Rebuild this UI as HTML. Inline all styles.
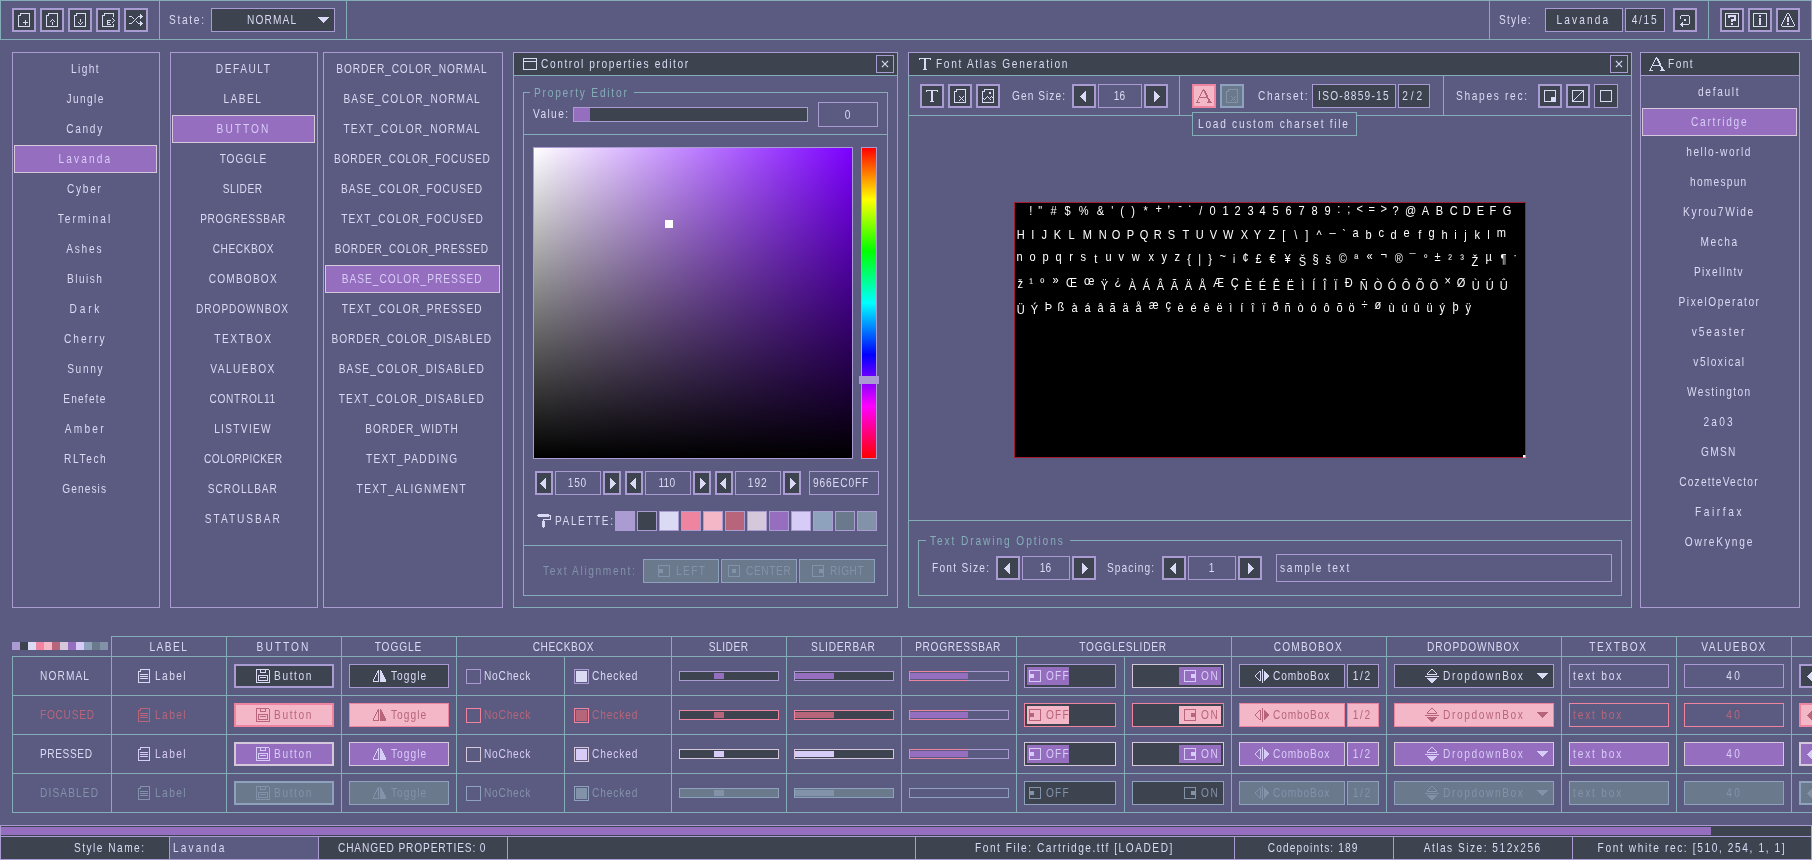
<!DOCTYPE html>
<html><head><meta charset="utf-8"><title>rGuiStyler</title><style>
html,body{margin:0;padding:0}
body{width:1812px;height:860px;background:#5b5b81;position:relative;overflow:hidden;font-family:"Liberation Sans",sans-serif;font-size:13px;line-height:15px}
.r{position:absolute;box-sizing:border-box}
.t{will-change:transform;position:absolute;display:flex;height:15px;white-space:pre;overflow:visible}
.t span{display:inline-block;white-space:pre}
.i{position:absolute;display:block;shape-rendering:crispEdges}
.at{will-change:transform;position:absolute;height:15px;color:#fff;white-space:pre}
.at span{position:absolute;display:block;transform:scaleX(0.85)}
</style></head><body>
<div class="r" style="left:0px;top:0px;width:1812px;height:1px;background:#84adb7;"></div>
<div class="r" style="left:0px;top:39px;width:1812px;height:1px;background:#84adb7;"></div>
<div class="r" style="left:0px;top:0px;width:1px;height:40px;background:#84adb7;"></div>
<div class="r" style="left:159px;top:0px;width:1px;height:40px;background:#84adb7;"></div>
<div class="r" style="left:346px;top:0px;width:1px;height:40px;background:#84adb7;"></div>
<div class="r" style="left:1489px;top:0px;width:1px;height:40px;background:#84adb7;"></div>
<div class="r" style="left:1708px;top:0px;width:1px;height:40px;background:#84adb7;"></div>
<div class="r" style="left:1811px;top:0px;width:1px;height:40px;background:#84adb7;"></div>
<div class="r" style="left:12px;top:8px;width:24px;height:24px;background:#3e4350;border:2px solid #ab9bd3;"></div>
<svg class="i" style="left:16px;top:12px" width="16" height="16" viewBox="0 0 16 16"><path fill="#dadaf4" d="M4 1h10v1h-10zM4 2h1v1h-1zM13 2h1v1h-1zM2 3h3v1h-3zM13 3h1v1h-1zM2 4h1v1h-1zM13 4h1v1h-1zM2 5h1v1h-1zM13 5h1v1h-1zM2 6h1v1h-1zM13 6h1v1h-1zM2 7h1v1h-1zM13 7h1v1h-1zM2 8h1v1h-1zM9 8h1v1h-1zM13 8h1v1h-1zM2 9h1v1h-1zM9 9h1v1h-1zM13 9h1v1h-1zM2 10h1v1h-1zM7 10h5v1h-5zM13 10h1v1h-1zM2 11h1v1h-1zM9 11h1v1h-1zM13 11h1v1h-1zM2 12h1v1h-1zM9 12h1v1h-1zM13 12h1v1h-1zM2 13h1v1h-1zM13 13h1v1h-1zM2 14h12v1h-12z"/></svg>
<div class="r" style="left:40px;top:8px;width:24px;height:24px;background:#3e4350;border:2px solid #ab9bd3;"></div>
<svg class="i" style="left:44px;top:12px" width="16" height="16" viewBox="0 0 16 16"><path fill="#dadaf4" d="M4 1h10v1h-10zM4 2h1v1h-1zM13 2h1v1h-1zM2 3h3v1h-3zM13 3h1v1h-1zM2 4h1v1h-1zM13 4h1v1h-1zM2 5h1v1h-1zM13 5h1v1h-1zM2 6h1v1h-1zM13 6h1v1h-1zM2 7h1v1h-1zM8 7h1v1h-1zM13 7h1v1h-1zM2 8h1v1h-1zM7 8h1v1h-1zM9 8h1v1h-1zM13 8h1v1h-1zM2 9h1v1h-1zM6 9h1v1h-1zM10 9h1v1h-1zM13 9h1v1h-1zM2 10h1v1h-1zM8 10h1v1h-1zM13 10h1v1h-1zM2 11h1v1h-1zM8 11h1v1h-1zM13 11h1v1h-1zM2 12h1v1h-1zM8 12h1v1h-1zM13 12h1v1h-1zM2 13h1v1h-1zM13 13h1v1h-1zM2 14h12v1h-12z"/></svg>
<div class="r" style="left:68px;top:8px;width:24px;height:24px;background:#3e4350;border:2px solid #ab9bd3;"></div>
<svg class="i" style="left:72px;top:12px" width="16" height="16" viewBox="0 0 16 16"><path fill="#dadaf4" d="M4 1h10v1h-10zM4 2h1v1h-1zM13 2h1v1h-1zM2 3h3v1h-3zM13 3h1v1h-1zM2 4h1v1h-1zM13 4h1v1h-1zM2 5h1v1h-1zM13 5h1v1h-1zM2 6h1v1h-1zM13 6h1v1h-1zM2 7h1v1h-1zM8 7h1v1h-1zM13 7h1v1h-1zM2 8h1v1h-1zM8 8h1v1h-1zM13 8h1v1h-1zM2 9h1v1h-1zM8 9h1v1h-1zM13 9h1v1h-1zM2 10h1v1h-1zM6 10h1v1h-1zM10 10h1v1h-1zM13 10h1v1h-1zM2 11h1v1h-1zM7 11h1v1h-1zM9 11h1v1h-1zM13 11h1v1h-1zM2 12h1v1h-1zM8 12h1v1h-1zM13 12h1v1h-1zM2 13h1v1h-1zM13 13h1v1h-1zM2 14h12v1h-12z"/></svg>
<div class="r" style="left:96px;top:8px;width:24px;height:24px;background:#3e4350;border:2px solid #ab9bd3;"></div>
<svg class="i" style="left:100px;top:12px" width="16" height="16" viewBox="0 0 16 16"><path fill="#dadaf4" d="M4 1h10v1h-10zM4 2h1v1h-1zM13 2h1v1h-1zM2 3h3v1h-3zM13 3h1v1h-1zM2 4h1v1h-1zM13 4h1v1h-1zM2 5h1v1h-1zM2 6h1v1h-1zM12 6h1v1h-1zM2 7h1v1h-1zM13 7h1v1h-1zM2 8h1v1h-1zM7 8h4v1h-4zM14 8h1v1h-1zM2 9h1v1h-1zM7 9h1v1h-1zM13 9h1v1h-1zM2 10h1v1h-1zM7 10h3v1h-3zM12 10h1v1h-1zM2 11h1v1h-1zM7 11h1v1h-1zM2 12h1v1h-1zM7 12h4v1h-4zM13 12h1v1h-1zM2 13h1v1h-1zM13 13h1v1h-1zM2 14h12v1h-12z"/></svg>
<div class="r" style="left:124px;top:8px;width:24px;height:24px;background:#3e4350;border:2px solid #ab9bd3;"></div>
<svg class="i" style="left:128px;top:12px" width="16" height="16" viewBox="0 0 16 16"><path fill="#dadaf4" d="M12 2h1v1h-1zM12 3h2v1h-2zM1 4h3v1h-3zM10 4h5v1h-5zM4 5h1v1h-1zM9 5h1v1h-1zM12 5h2v1h-2zM5 6h1v1h-1zM8 6h1v1h-1zM12 6h1v1h-1zM7 7h1v1h-1zM6 8h1v1h-1zM5 9h1v1h-1zM8 9h1v1h-1zM12 9h1v1h-1zM4 10h1v1h-1zM9 10h1v1h-1zM12 10h2v1h-2zM1 11h3v1h-3zM10 11h5v1h-5zM12 12h2v1h-2zM12 13h1v1h-1z"/></svg>
<div class="t" style="left:169px;top:12px;width:40px;justify-content:flex-start;color:#dadaf4;"><span style="letter-spacing:2.181px;transform:scaleX(0.78);transform-origin:left;margin-left:0.00px">State:</span></div>
<div class="r" style="left:211px;top:8px;width:124px;height:24px;background:#3e4350;border:1px solid #ab9bd3;"></div>
<div class="t" style="left:211px;top:12px;width:124px;justify-content:center;color:#dadaf4;"><span style="letter-spacing:1.441px;transform:scaleX(0.78);transform-origin:center;margin-left:-0.84px">NORMAL</span></div>
<svg class="i" style="left:318px;top:17px" width="11" height="6"><path fill="#dadaf4" d="M0 0h11v1h-11zM1 1h9v1h-9zM2 2h7v1h-7zM3 3h5v1h-5zM4 4h3v1h-3zM5 5h1v1h-1z"/></svg>
<div class="t" style="left:1499px;top:12px;width:40px;justify-content:flex-start;color:#dadaf4;"><span style="letter-spacing:1.6px;transform:scaleX(0.78);transform-origin:left;margin-left:0.00px">Style:</span></div>
<div class="r" style="left:1545px;top:8px;width:78px;height:24px;background:#3e4350;border:1px solid #ab9bd3;"></div>
<div class="t" style="left:1545px;top:12px;width:78px;justify-content:center;color:#dadaf4;"><span style="letter-spacing:2.691px;transform:scaleX(0.78);transform-origin:center;margin-left:-0.35px">Lavanda</span></div>
<div class="r" style="left:1625px;top:8px;width:40px;height:24px;background:#3e4350;border:1px solid #ab9bd3;"></div>
<div class="t" style="left:1625px;top:12px;width:40px;justify-content:center;color:#dadaf4;"><span style="letter-spacing:2.164px;transform:scaleX(0.78);transform-origin:center;margin-left:-0.56px">4/15</span></div>
<div class="r" style="left:1673px;top:8px;width:24px;height:24px;background:#3e4350;border:2px solid #ab9bd3;"></div>
<svg class="i" style="left:1677px;top:12px" width="16" height="16" viewBox="0 0 16 16"><path fill="#dadaf4" d="M4 3h8v1h-8zM3 4h1v1h-1zM12 4h1v1h-1zM3 5h1v1h-1zM12 5h1v1h-1zM3 6h1v1h-1zM12 6h1v1h-1zM7 7h2v1h-2zM12 7h1v1h-1zM7 8h2v1h-2zM12 8h1v1h-1zM12 9h1v1h-1zM5 10h1v1h-1zM12 10h1v1h-1zM4 11h2v1h-2zM12 11h1v1h-1zM3 12h9v1h-9zM4 13h2v1h-2zM5 14h1v1h-1z"/></svg>
<div class="r" style="left:1720px;top:8px;width:24px;height:24px;background:#3e4350;border:2px solid #ab9bd3;"></div>
<svg class="i" style="left:1724px;top:12px" width="16" height="16" viewBox="0 0 16 16"><path fill="#dadaf4" d="M1 1h14v1h-14zM1 2h1v1h-1zM14 2h1v1h-1zM1 3h1v1h-1zM4 3h8v1h-8zM14 3h1v1h-1zM1 4h1v1h-1zM4 4h8v1h-8zM14 4h1v1h-1zM1 5h1v1h-1zM4 5h2v1h-2zM10 5h2v1h-2zM14 5h1v1h-1zM1 6h1v1h-1zM10 6h2v1h-2zM14 6h1v1h-1zM1 7h1v1h-1zM7 7h5v1h-5zM14 7h1v1h-1zM1 8h1v1h-1zM7 8h5v1h-5zM14 8h1v1h-1zM1 9h1v1h-1zM7 9h2v1h-2zM14 9h1v1h-1zM1 10h1v1h-1zM14 10h1v1h-1zM1 11h1v1h-1zM7 11h2v1h-2zM14 11h1v1h-1zM1 12h1v1h-1zM7 12h2v1h-2zM14 12h1v1h-1zM1 13h1v1h-1zM14 13h1v1h-1zM1 14h14v1h-14z"/></svg>
<div class="r" style="left:1748px;top:8px;width:24px;height:24px;background:#3e4350;border:2px solid #ab9bd3;"></div>
<svg class="i" style="left:1752px;top:12px" width="16" height="16" viewBox="0 0 16 16"><path fill="#dadaf4" d="M1 1h14v1h-14zM1 2h1v1h-1zM14 2h1v1h-1zM1 3h1v1h-1zM7 3h2v1h-2zM14 3h1v1h-1zM1 4h1v1h-1zM7 4h2v1h-2zM14 4h1v1h-1zM1 5h1v1h-1zM14 5h1v1h-1zM1 6h1v1h-1zM7 6h2v1h-2zM14 6h1v1h-1zM1 7h1v1h-1zM7 7h2v1h-2zM14 7h1v1h-1zM1 8h1v1h-1zM7 8h2v1h-2zM14 8h1v1h-1zM1 9h1v1h-1zM7 9h2v1h-2zM14 9h1v1h-1zM1 10h1v1h-1zM7 10h2v1h-2zM14 10h1v1h-1zM1 11h1v1h-1zM7 11h2v1h-2zM14 11h1v1h-1zM1 12h1v1h-1zM7 12h2v1h-2zM14 12h1v1h-1zM1 13h1v1h-1zM14 13h1v1h-1zM1 14h14v1h-14z"/></svg>
<div class="r" style="left:1776px;top:8px;width:24px;height:24px;background:#3e4350;border:2px solid #ab9bd3;"></div>
<svg class="i" style="left:1780px;top:12px" width="16" height="16" viewBox="0 0 16 16"><path fill="#dadaf4" d="M7 1h2v1h-2zM6 2h1v1h-1zM9 2h1v1h-1zM6 3h1v1h-1zM9 3h1v1h-1zM5 4h1v1h-1zM10 4h1v1h-1zM5 5h1v1h-1zM7 5h2v1h-2zM10 5h1v1h-1zM4 6h1v1h-1zM7 6h2v1h-2zM11 6h1v1h-1zM4 7h1v1h-1zM7 7h2v1h-2zM11 7h1v1h-1zM3 8h1v1h-1zM7 8h2v1h-2zM12 8h1v1h-1zM3 9h1v1h-1zM7 9h2v1h-2zM12 9h1v1h-1zM2 10h1v1h-1zM13 10h1v1h-1zM2 11h1v1h-1zM7 11h2v1h-2zM13 11h1v1h-1zM1 12h1v1h-1zM7 12h2v1h-2zM14 12h1v1h-1zM1 13h1v1h-1zM14 13h1v1h-1zM2 14h12v1h-12z"/></svg>
<div class="r" style="left:12px;top:52px;width:148px;height:556px;border:1px solid #ab9bd3;"></div>
<div class="t" style="left:14px;top:61px;width:143px;justify-content:center;color:#dadaf4;"><span style="letter-spacing:1.767px;transform:scaleX(0.78);transform-origin:center;margin-left:-0.71px">Light</span></div>
<div class="t" style="left:14px;top:91px;width:143px;justify-content:center;color:#dadaf4;"><span style="letter-spacing:1.8px;transform:scaleX(0.78);transform-origin:center;margin-left:-0.70px">Jungle</span></div>
<div class="t" style="left:14px;top:121px;width:143px;justify-content:center;color:#dadaf4;"><span style="letter-spacing:2.112px;transform:scaleX(0.78);transform-origin:center;margin-left:-0.58px">Candy</span></div>
<div class="r" style="left:14px;top:145px;width:143px;height:28px;background:#966ec0;border:1px solid #d5c8db;"></div>
<div class="t" style="left:14px;top:151px;width:143px;justify-content:center;color:#d7ccf7;"><span style="letter-spacing:2.691px;transform:scaleX(0.78);transform-origin:center;margin-left:-0.35px">Lavanda</span></div>
<div class="t" style="left:14px;top:181px;width:143px;justify-content:center;color:#dadaf4;"><span style="letter-spacing:2.196px;transform:scaleX(0.78);transform-origin:center;margin-left:-0.54px">Cyber</span></div>
<div class="t" style="left:14px;top:211px;width:143px;justify-content:center;color:#dadaf4;"><span style="letter-spacing:2.598px;transform:scaleX(0.78);transform-origin:center;margin-left:-0.39px">Terminal</span></div>
<div class="t" style="left:14px;top:241px;width:143px;justify-content:center;color:#dadaf4;"><span style="letter-spacing:2.282px;transform:scaleX(0.78);transform-origin:center;margin-left:-0.51px">Ashes</span></div>
<div class="t" style="left:14px;top:271px;width:143px;justify-content:center;color:#dadaf4;"><span style="letter-spacing:1.842px;transform:scaleX(0.78);transform-origin:center;margin-left:-0.68px">Bluish</span></div>
<div class="t" style="left:14px;top:301px;width:143px;justify-content:center;color:#dadaf4;"><span style="letter-spacing:3.586px;transform:scaleX(0.78);transform-origin:center;margin-left:-0.00px">Dark</span></div>
<div class="t" style="left:14px;top:331px;width:143px;justify-content:center;color:#dadaf4;"><span style="letter-spacing:2.609px;transform:scaleX(0.78);transform-origin:center;margin-left:-0.38px">Cherry</span></div>
<div class="t" style="left:14px;top:361px;width:143px;justify-content:center;color:#dadaf4;"><span style="letter-spacing:2.099px;transform:scaleX(0.78);transform-origin:center;margin-left:-0.58px">Sunny</span></div>
<div class="t" style="left:14px;top:391px;width:143px;justify-content:center;color:#dadaf4;"><span style="letter-spacing:1.569px;transform:scaleX(0.78);transform-origin:center;margin-left:-0.79px">Enefete</span></div>
<div class="t" style="left:14px;top:421px;width:143px;justify-content:center;color:#dadaf4;"><span style="letter-spacing:2.864px;transform:scaleX(0.78);transform-origin:center;margin-left:-0.28px">Amber</span></div>
<div class="t" style="left:14px;top:451px;width:143px;justify-content:center;color:#dadaf4;"><span style="letter-spacing:2.044px;transform:scaleX(0.78);transform-origin:center;margin-left:-0.60px">RLTech</span></div>
<div class="t" style="left:14px;top:481px;width:143px;justify-content:center;color:#dadaf4;"><span style="letter-spacing:1.389px;transform:scaleX(0.78);transform-origin:center;margin-left:-0.86px">Genesis</span></div>
<div class="r" style="left:170px;top:52px;width:148px;height:556px;border:1px solid #ab9bd3;"></div>
<div class="t" style="left:172px;top:61px;width:143px;justify-content:center;color:#dadaf4;"><span style="letter-spacing:1.969px;transform:scaleX(0.78);transform-origin:center;margin-left:-0.63px">DEFAULT</span></div>
<div class="t" style="left:172px;top:91px;width:143px;justify-content:center;color:#dadaf4;"><span style="letter-spacing:1.87px;transform:scaleX(0.78);transform-origin:center;margin-left:-0.67px">LABEL</span></div>
<div class="r" style="left:172px;top:115px;width:143px;height:28px;background:#966ec0;border:1px solid #d5c8db;"></div>
<div class="t" style="left:172px;top:121px;width:143px;justify-content:center;color:#d7ccf7;"><span style="letter-spacing:2.615px;transform:scaleX(0.78);transform-origin:center;margin-left:-0.38px">BUTTON</span></div>
<div class="t" style="left:172px;top:151px;width:143px;justify-content:center;color:#dadaf4;"><span style="letter-spacing:1.16px;transform:scaleX(0.78);transform-origin:center;margin-left:-0.95px">TOGGLE</span></div>
<div class="t" style="left:172px;top:181px;width:143px;justify-content:center;color:#dadaf4;"><span style="letter-spacing:0.711px;transform:scaleX(0.78);transform-origin:center;margin-left:-1.12px">SLIDER</span></div>
<div class="t" style="left:172px;top:211px;width:143px;justify-content:center;color:#dadaf4;"><span style="letter-spacing:0.895px;transform:scaleX(0.78);transform-origin:center;margin-left:-1.05px">PROGRESSBAR</span></div>
<div class="t" style="left:172px;top:241px;width:143px;justify-content:center;color:#dadaf4;"><span style="letter-spacing:0.732px;transform:scaleX(0.78);transform-origin:center;margin-left:-1.11px">CHECKBOX</span></div>
<div class="t" style="left:172px;top:271px;width:143px;justify-content:center;color:#dadaf4;"><span style="letter-spacing:1.498px;transform:scaleX(0.78);transform-origin:center;margin-left:-0.82px">COMBOBOX</span></div>
<div class="t" style="left:172px;top:301px;width:143px;justify-content:center;color:#dadaf4;"><span style="letter-spacing:1.178px;transform:scaleX(0.78);transform-origin:center;margin-left:-0.94px">DROPDOWNBOX</span></div>
<div class="t" style="left:172px;top:331px;width:143px;justify-content:center;color:#dadaf4;"><span style="letter-spacing:2.024px;transform:scaleX(0.78);transform-origin:center;margin-left:-0.61px">TEXTBOX</span></div>
<div class="t" style="left:172px;top:361px;width:143px;justify-content:center;color:#dadaf4;"><span style="letter-spacing:1.848px;transform:scaleX(0.78);transform-origin:center;margin-left:-0.68px">VALUEBOX</span></div>
<div class="t" style="left:172px;top:391px;width:143px;justify-content:center;color:#dadaf4;"><span style="letter-spacing:0.913px;transform:scaleX(0.78);transform-origin:center;margin-left:-1.04px">CONTROL11</span></div>
<div class="t" style="left:172px;top:421px;width:143px;justify-content:center;color:#dadaf4;"><span style="letter-spacing:1.68px;transform:scaleX(0.78);transform-origin:center;margin-left:-0.74px">LISTVIEW</span></div>
<div class="t" style="left:172px;top:451px;width:143px;justify-content:center;color:#dadaf4;"><span style="letter-spacing:0.537px;transform:scaleX(0.78);transform-origin:center;margin-left:-1.19px">COLORPICKER</span></div>
<div class="t" style="left:172px;top:481px;width:143px;justify-content:center;color:#dadaf4;"><span style="letter-spacing:1.215px;transform:scaleX(0.78);transform-origin:center;margin-left:-0.93px">SCROLLBAR</span></div>
<div class="t" style="left:172px;top:511px;width:143px;justify-content:center;color:#dadaf4;"><span style="letter-spacing:2.493px;transform:scaleX(0.78);transform-origin:center;margin-left:-0.43px">STATUSBAR</span></div>
<div class="r" style="left:323px;top:52px;width:180px;height:556px;border:1px solid #ab9bd3;"></div>
<div class="t" style="left:325px;top:61px;width:175px;justify-content:center;color:#dadaf4;"><span style="letter-spacing:1.154px;transform:scaleX(0.78);transform-origin:center;margin-left:-0.95px">BORDER_COLOR_NORMAL</span></div>
<div class="t" style="left:325px;top:91px;width:175px;justify-content:center;color:#dadaf4;"><span style="letter-spacing:1.485px;transform:scaleX(0.78);transform-origin:center;margin-left:-0.82px">BASE_COLOR_NORMAL</span></div>
<div class="t" style="left:325px;top:121px;width:175px;justify-content:center;color:#dadaf4;"><span style="letter-spacing:1.576px;transform:scaleX(0.78);transform-origin:center;margin-left:-0.79px">TEXT_COLOR_NORMAL</span></div>
<div class="t" style="left:325px;top:151px;width:175px;justify-content:center;color:#dadaf4;"><span style="letter-spacing:1.04px;transform:scaleX(0.78);transform-origin:center;margin-left:-0.99px">BORDER_COLOR_FOCUSED</span></div>
<div class="t" style="left:325px;top:181px;width:175px;justify-content:center;color:#dadaf4;"><span style="letter-spacing:1.292px;transform:scaleX(0.78);transform-origin:center;margin-left:-0.90px">BASE_COLOR_FOCUSED</span></div>
<div class="t" style="left:325px;top:211px;width:175px;justify-content:center;color:#dadaf4;"><span style="letter-spacing:1.423px;transform:scaleX(0.78);transform-origin:center;margin-left:-0.85px">TEXT_COLOR_FOCUSED</span></div>
<div class="t" style="left:325px;top:241px;width:175px;justify-content:center;color:#dadaf4;"><span style="letter-spacing:0.953px;transform:scaleX(0.78);transform-origin:center;margin-left:-1.03px">BORDER_COLOR_PRESSED</span></div>
<div class="r" style="left:325px;top:265px;width:175px;height:28px;background:#966ec0;border:1px solid #d5c8db;"></div>
<div class="t" style="left:325px;top:271px;width:175px;justify-content:center;color:#d7ccf7;"><span style="letter-spacing:1.271px;transform:scaleX(0.78);transform-origin:center;margin-left:-0.90px">BASE_COLOR_PRESSED</span></div>
<div class="t" style="left:325px;top:301px;width:175px;justify-content:center;color:#dadaf4;"><span style="letter-spacing:1.357px;transform:scaleX(0.78);transform-origin:center;margin-left:-0.87px">TEXT_COLOR_PRESSED</span></div>
<div class="t" style="left:325px;top:331px;width:175px;justify-content:center;color:#dadaf4;"><span style="letter-spacing:1.188px;transform:scaleX(0.78);transform-origin:center;margin-left:-0.94px">BORDER_COLOR_DISABLED</span></div>
<div class="t" style="left:325px;top:361px;width:175px;justify-content:center;color:#dadaf4;"><span style="letter-spacing:1.471px;transform:scaleX(0.78);transform-origin:center;margin-left:-0.83px">BASE_COLOR_DISABLED</span></div>
<div class="t" style="left:325px;top:391px;width:175px;justify-content:center;color:#dadaf4;"><span style="letter-spacing:1.552px;transform:scaleX(0.78);transform-origin:center;margin-left:-0.79px">TEXT_COLOR_DISABLED</span></div>
<div class="t" style="left:325px;top:421px;width:175px;justify-content:center;color:#dadaf4;"><span style="letter-spacing:1.207px;transform:scaleX(0.78);transform-origin:center;margin-left:-0.93px">BORDER_WIDTH</span></div>
<div class="t" style="left:325px;top:451px;width:175px;justify-content:center;color:#dadaf4;"><span style="letter-spacing:1.644px;transform:scaleX(0.78);transform-origin:center;margin-left:-0.76px">TEXT_PADDING</span></div>
<div class="t" style="left:325px;top:481px;width:175px;justify-content:center;color:#dadaf4;"><span style="letter-spacing:1.804px;transform:scaleX(0.78);transform-origin:center;margin-left:-0.70px">TEXT_ALIGNMENT</span></div>
<div class="r" style="left:513px;top:75px;width:385px;height:533px;border:1px solid #84adb7;"></div>
<div class="r" style="left:513px;top:52px;width:385px;height:24px;background:#3e4350;border:1px solid #ab9bd3;"></div>
<div class="r" style="left:513px;top:75px;width:385px;height:1px;background:#84adb7;"></div>
<svg class="i" style="left:522px;top:56px" width="16" height="16" viewBox="0 0 16 16"><path fill="#dadaf4" d="M1 2h14v1h-14zM1 3h1v1h-1zM14 3h1v1h-1zM1 4h1v1h-1zM14 4h1v1h-1zM1 5h14v1h-14zM1 6h1v1h-1zM14 6h1v1h-1zM1 7h1v1h-1zM14 7h1v1h-1zM1 8h1v1h-1zM14 8h1v1h-1zM1 9h1v1h-1zM14 9h1v1h-1zM1 10h1v1h-1zM14 10h1v1h-1zM1 11h1v1h-1zM14 11h1v1h-1zM1 12h1v1h-1zM14 12h1v1h-1zM1 13h14v1h-14z"/></svg>
<div class="t" style="left:541px;top:56px;width:300px;justify-content:flex-start;color:#dadaf4;"><span style="letter-spacing:2.042px;transform:scaleX(0.78);transform-origin:left;margin-left:0.00px">Control properties editor</span></div>
<div class="r" style="left:876px;top:55px;width:18px;height:18px;background:#3e4350;border:1px solid #ab9bd3;"></div>
<svg class="i" style="left:881px;top:60px;shape-rendering:auto" width="8" height="8"><path stroke="#dadaf4" stroke-width="1.15" fill="none" d="M0.9 0.9L7.1 7.1M7.1 0.9L0.9 7.1"/></svg>
<div class="r" style="left:523px;top:92px;width:365px;height:504px;border:1px solid #84adb7;"></div>
<div class="r" style="left:530px;top:92px;width:104px;height:1px;background:#5b5b81;"></div>
<div class="t" style="left:534px;top:85px;width:300px;justify-content:flex-start;color:#84adb7;"><span style="letter-spacing:2.305px;transform:scaleX(0.78);transform-origin:left;margin-left:0.00px">Property Editor</span></div>
<div class="t" style="left:533px;top:106px;width:40px;justify-content:flex-start;color:#dadaf4;"><span style="letter-spacing:1.795px;transform:scaleX(0.78);transform-origin:left;margin-left:0.00px">Value:</span></div>
<div class="r" style="left:573px;top:107px;width:235px;height:15px;background:#3e4350;border:1px solid #ab9bd3;"></div>
<div class="r" style="left:574px;top:108px;width:16px;height:13px;background:#966ec0;"></div>
<div class="r" style="left:818px;top:102px;width:60px;height:25px;border:1px solid #ab9bd3;"></div>
<div class="t" style="left:818px;top:107px;width:60px;justify-content:center;color:#dadaf4;"><span style="letter-spacing:0px;transform:scaleX(0.78);transform-origin:center;margin-left:-1.40px">0</span></div>
<div class="r" style="left:523px;top:134px;width:365px;height:1px;background:#84adb7;"></div>
<div class="r" style="left:533px;top:147px;width:320px;height:312px;border:1px solid #ab9bd3;background:linear-gradient(to bottom,rgba(0,0,0,0),#000),linear-gradient(to right,#fff,#7c00ff)"></div>
<div class="r" style="left:665px;top:220px;width:8px;height:8px;background:#fff;"></div>
<div class="r" style="left:861px;top:147px;width:16px;height:312px;border:1px solid #ab9bd3;background:linear-gradient(to bottom,#f00,#ff0 16.67%,#0f0 33.33%,#0ff 50%,#00f 66.67%,#f0f 83.33%,#f00)"></div>
<div class="r" style="left:859px;top:376px;width:20px;height:8px;background:#ab9bd3;"></div>
<div class="r" style="left:535px;top:471px;width:18px;height:24px;background:#3e4350;border:2px solid #ab9bd3;"></div>
<svg class="i" style="left:540px;top:478px" width="6" height="11"><path fill="#dadaf4" d="M0 5h1v1h-1zM1 4h1v3h-1zM2 3h1v5h-1zM3 2h1v7h-1zM4 1h1v9h-1zM5 0h1v11h-1z"/></svg>
<div class="r" style="left:555px;top:471px;width:46px;height:24px;border:1px solid #ab9bd3;"></div>
<div class="t" style="left:555px;top:475px;width:46px;justify-content:center;color:#dadaf4;"><span style="letter-spacing:1.014px;transform:scaleX(0.78);transform-origin:center;margin-left:-1.00px">150</span></div>
<div class="r" style="left:603px;top:471px;width:18px;height:24px;background:#3e4350;border:2px solid #ab9bd3;"></div>
<svg class="i" style="left:610px;top:478px" width="6" height="11"><path fill="#dadaf4" d="M0 0h1v11h-1zM1 1h1v9h-1zM2 2h1v7h-1zM3 3h1v5h-1zM4 4h1v3h-1zM5 5h1v1h-1z"/></svg>
<div class="r" style="left:625px;top:471px;width:18px;height:24px;background:#3e4350;border:2px solid #ab9bd3;"></div>
<svg class="i" style="left:630px;top:478px" width="6" height="11"><path fill="#dadaf4" d="M0 5h1v1h-1zM1 4h1v3h-1zM2 3h1v5h-1zM3 2h1v7h-1zM4 1h1v9h-1zM5 0h1v11h-1z"/></svg>
<div class="r" style="left:645px;top:471px;width:46px;height:24px;border:1px solid #ab9bd3;"></div>
<div class="t" style="left:645px;top:475px;width:46px;justify-content:center;color:#dadaf4;"><span style="letter-spacing:0.343px;transform:scaleX(0.78);transform-origin:center;margin-left:-1.27px">110</span></div>
<div class="r" style="left:693px;top:471px;width:18px;height:24px;background:#3e4350;border:2px solid #ab9bd3;"></div>
<svg class="i" style="left:700px;top:478px" width="6" height="11"><path fill="#dadaf4" d="M0 0h1v11h-1zM1 1h1v9h-1zM2 2h1v7h-1zM3 3h1v5h-1zM4 4h1v3h-1zM5 5h1v1h-1z"/></svg>
<div class="r" style="left:715px;top:471px;width:18px;height:24px;background:#3e4350;border:2px solid #ab9bd3;"></div>
<svg class="i" style="left:720px;top:478px" width="6" height="11"><path fill="#dadaf4" d="M0 5h1v1h-1zM1 4h1v3h-1zM2 3h1v5h-1zM3 2h1v7h-1zM4 1h1v9h-1zM5 0h1v11h-1z"/></svg>
<div class="r" style="left:735px;top:471px;width:46px;height:24px;border:1px solid #ab9bd3;"></div>
<div class="t" style="left:735px;top:475px;width:46px;justify-content:center;color:#dadaf4;"><span style="letter-spacing:1.271px;transform:scaleX(0.78);transform-origin:center;margin-left:-0.90px">192</span></div>
<div class="r" style="left:783px;top:471px;width:18px;height:24px;background:#3e4350;border:2px solid #ab9bd3;"></div>
<svg class="i" style="left:790px;top:478px" width="6" height="11"><path fill="#dadaf4" d="M0 0h1v11h-1zM1 1h1v9h-1zM2 2h1v7h-1zM3 3h1v5h-1zM4 4h1v3h-1zM5 5h1v1h-1z"/></svg>
<div class="r" style="left:809px;top:471px;width:70px;height:24px;border:1px solid #ab9bd3;"></div>
<div class="t" style="left:813px;top:475px;width:70px;justify-content:flex-start;color:#dadaf4;"><span style="letter-spacing:1.13px;transform:scaleX(0.78);transform-origin:left;margin-left:0.00px">966EC0FF</span></div>
<svg class="i" style="left:535px;top:512px" width="16" height="16" viewBox="0 0 16 16"><path fill="#dadaf4" d="M3 2h11v1h-11zM2 3h14v1h-14zM3 4h11v1h-11zM15 4h1v1h-1zM15 5h1v1h-1zM15 6h1v1h-1zM8 7h8v1h-8zM8 8h1v1h-1zM7 9h3v1h-3zM7 10h3v1h-3zM7 11h3v1h-3zM7 12h3v1h-3zM7 13h3v1h-3zM7 14h3v1h-3zM8 15h1v1h-1z"/></svg>
<div class="t" style="left:555px;top:513px;width:60px;justify-content:flex-start;color:#dadaf4;"><span style="letter-spacing:1.988px;transform:scaleX(0.78);transform-origin:left;margin-left:0.00px">PALETTE:</span></div>
<div class="r" style="left:615px;top:511px;width:20px;height:20px;background:#ab9bd3;border:1px solid #ab9bd3;"></div>
<div class="r" style="left:637px;top:511px;width:20px;height:20px;background:#3e4350;border:1px solid #ab9bd3;"></div>
<div class="r" style="left:659px;top:511px;width:20px;height:20px;background:#dadaf4;border:1px solid #ab9bd3;"></div>
<div class="r" style="left:681px;top:511px;width:20px;height:20px;background:#ee84a0;border:1px solid #ab9bd3;"></div>
<div class="r" style="left:703px;top:511px;width:20px;height:20px;background:#f4b7c7;border:1px solid #ab9bd3;"></div>
<div class="r" style="left:725px;top:511px;width:20px;height:20px;background:#b7657b;border:1px solid #ab9bd3;"></div>
<div class="r" style="left:747px;top:511px;width:20px;height:20px;background:#d5c8db;border:1px solid #ab9bd3;"></div>
<div class="r" style="left:769px;top:511px;width:20px;height:20px;background:#966ec0;border:1px solid #ab9bd3;"></div>
<div class="r" style="left:791px;top:511px;width:20px;height:20px;background:#d7ccf7;border:1px solid #ab9bd3;"></div>
<div class="r" style="left:813px;top:511px;width:20px;height:20px;background:#8fa2bd;border:1px solid #ab9bd3;"></div>
<div class="r" style="left:835px;top:511px;width:20px;height:20px;background:#6b798d;border:1px solid #ab9bd3;"></div>
<div class="r" style="left:857px;top:511px;width:20px;height:20px;background:#8292a9;border:1px solid #ab9bd3;"></div>
<div class="r" style="left:523px;top:545px;width:365px;height:1px;background:#84adb7;"></div>
<div class="t" style="left:543px;top:563px;width:100px;justify-content:flex-start;color:#8292a9;"><span style="letter-spacing:2.11px;transform:scaleX(0.78);transform-origin:left;margin-left:0.00px">Text Alignment:</span></div>
<div class="r" style="left:643px;top:559px;width:76px;height:24px;background:#6b798d;border:1px solid #8fa2bd;"></div>
<svg class="i" style="left:656px;top:563px" width="16" height="16" viewBox="0 0 16 16"><path fill="#8292a9" d="M2 2h12v1h-12zM2 3h1v1h-1zM13 3h1v1h-1zM2 4h1v1h-1zM13 4h1v1h-1zM2 5h1v1h-1zM13 5h1v1h-1zM2 6h5v1h-5zM13 6h1v1h-1zM2 7h5v1h-5zM13 7h1v1h-1zM2 8h5v1h-5zM13 8h1v1h-1zM2 9h5v1h-5zM13 9h1v1h-1zM2 10h1v1h-1zM13 10h1v1h-1zM2 11h1v1h-1zM13 11h1v1h-1zM2 12h1v1h-1zM13 12h1v1h-1zM2 13h12v1h-12z"/></svg>
<div class="t" style="left:676px;top:563px;width:60px;justify-content:flex-start;color:#8292a9;"><span style="letter-spacing:1.799px;transform:scaleX(0.78);transform-origin:left;margin-left:0.00px">LEFT</span></div>
<div class="r" style="left:721px;top:559px;width:76px;height:24px;background:#6b798d;border:1px solid #8fa2bd;"></div>
<svg class="i" style="left:726px;top:563px" width="16" height="16" viewBox="0 0 16 16"><path fill="#8292a9" d="M2 2h12v1h-12zM2 3h1v1h-1zM13 3h1v1h-1zM2 4h1v1h-1zM13 4h1v1h-1zM2 5h1v1h-1zM13 5h1v1h-1zM2 6h1v1h-1zM6 6h4v1h-4zM13 6h1v1h-1zM2 7h1v1h-1zM6 7h4v1h-4zM13 7h1v1h-1zM2 8h1v1h-1zM6 8h4v1h-4zM13 8h1v1h-1zM2 9h1v1h-1zM6 9h4v1h-4zM13 9h1v1h-1zM2 10h1v1h-1zM13 10h1v1h-1zM2 11h1v1h-1zM13 11h1v1h-1zM2 12h1v1h-1zM13 12h1v1h-1zM2 13h12v1h-12z"/></svg>
<div class="t" style="left:746px;top:563px;width:60px;justify-content:flex-start;color:#8292a9;"><span style="letter-spacing:0.773px;transform:scaleX(0.78);transform-origin:left;margin-left:0.00px">CENTER</span></div>
<div class="r" style="left:799px;top:559px;width:76px;height:24px;background:#6b798d;border:1px solid #8fa2bd;"></div>
<svg class="i" style="left:810px;top:563px" width="16" height="16" viewBox="0 0 16 16"><path fill="#8292a9" d="M2 2h12v1h-12zM2 3h1v1h-1zM13 3h1v1h-1zM2 4h1v1h-1zM13 4h1v1h-1zM2 5h1v1h-1zM13 5h1v1h-1zM2 6h1v1h-1zM9 6h5v1h-5zM2 7h1v1h-1zM9 7h5v1h-5zM2 8h1v1h-1zM9 8h5v1h-5zM2 9h1v1h-1zM9 9h5v1h-5zM2 10h1v1h-1zM13 10h1v1h-1zM2 11h1v1h-1zM13 11h1v1h-1zM2 12h1v1h-1zM13 12h1v1h-1zM2 13h12v1h-12z"/></svg>
<div class="t" style="left:830px;top:563px;width:60px;justify-content:flex-start;color:#8292a9;"><span style="letter-spacing:0.659px;transform:scaleX(0.78);transform-origin:left;margin-left:0.00px">RIGHT</span></div>
<div class="r" style="left:908px;top:75px;width:724px;height:533px;border:1px solid #84adb7;"></div>
<div class="r" style="left:908px;top:52px;width:724px;height:24px;background:#3e4350;border:1px solid #ab9bd3;"></div>
<div class="r" style="left:908px;top:75px;width:724px;height:1px;background:#84adb7;"></div>
<svg class="i" style="left:917px;top:56px" width="16" height="16" viewBox="0 0 16 16"><path fill="#dadaf4" d="M2 2h12v1h-12zM2 3h1v1h-1zM7 3h2v1h-2zM13 3h1v1h-1zM7 4h2v1h-2zM7 5h2v1h-2zM7 6h2v1h-2zM7 7h2v1h-2zM7 8h2v1h-2zM7 9h2v1h-2zM7 10h2v1h-2zM7 11h2v1h-2zM7 12h2v1h-2zM6 13h4v1h-4z"/></svg>
<div class="t" style="left:936px;top:56px;width:300px;justify-content:flex-start;color:#dadaf4;"><span style="letter-spacing:2.142px;transform:scaleX(0.78);transform-origin:left;margin-left:0.00px">Font Atlas Generation</span></div>
<div class="r" style="left:1610px;top:55px;width:18px;height:18px;background:#3e4350;border:1px solid #ab9bd3;"></div>
<svg class="i" style="left:1615px;top:60px;shape-rendering:auto" width="8" height="8"><path stroke="#dadaf4" stroke-width="1.15" fill="none" d="M0.9 0.9L7.1 7.1M7.1 0.9L0.9 7.1"/></svg>
<div class="r" style="left:908px;top:115px;width:724px;height:1px;background:#84adb7;"></div>
<div class="r" style="left:1179px;top:75px;width:1px;height:41px;background:#84adb7;"></div>
<div class="r" style="left:1443px;top:75px;width:1px;height:41px;background:#84adb7;"></div>
<div class="r" style="left:920px;top:84px;width:24px;height:24px;background:#3e4350;border:2px solid #ab9bd3;"></div>
<svg class="i" style="left:924px;top:88px" width="16" height="16" viewBox="0 0 16 16"><path fill="#dadaf4" d="M2 2h12v1h-12zM2 3h1v1h-1zM7 3h2v1h-2zM13 3h1v1h-1zM7 4h2v1h-2zM7 5h2v1h-2zM7 6h2v1h-2zM7 7h2v1h-2zM7 8h2v1h-2zM7 9h2v1h-2zM7 10h2v1h-2zM7 11h2v1h-2zM7 12h2v1h-2zM6 13h4v1h-4z"/></svg>
<div class="r" style="left:948px;top:84px;width:24px;height:24px;background:#3e4350;border:2px solid #ab9bd3;"></div>
<svg class="i" style="left:952px;top:88px" width="16" height="16" viewBox="0 0 16 16"><path fill="#dadaf4" d="M4 1h10v1h-10zM4 2h1v1h-1zM13 2h1v1h-1zM2 3h3v1h-3zM13 3h1v1h-1zM2 4h1v1h-1zM13 4h1v1h-1zM2 5h1v1h-1zM13 5h1v1h-1zM2 6h1v1h-1zM13 6h1v1h-1zM2 7h1v1h-1zM13 7h1v1h-1zM2 8h1v1h-1zM7 8h1v1h-1zM11 8h1v1h-1zM13 8h1v1h-1zM2 9h1v1h-1zM8 9h1v1h-1zM10 9h1v1h-1zM13 9h1v1h-1zM2 10h1v1h-1zM9 10h1v1h-1zM13 10h1v1h-1zM2 11h1v1h-1zM8 11h1v1h-1zM10 11h1v1h-1zM13 11h1v1h-1zM2 12h1v1h-1zM7 12h1v1h-1zM11 12h1v1h-1zM13 12h1v1h-1zM2 13h1v1h-1zM13 13h1v1h-1zM2 14h12v1h-12z"/></svg>
<div class="r" style="left:976px;top:84px;width:24px;height:24px;background:#3e4350;border:2px solid #ab9bd3;"></div>
<svg class="i" style="left:980px;top:88px" width="16" height="16" viewBox="0 0 16 16"><path fill="#dadaf4" d="M4 1h10v1h-10zM4 2h1v1h-1zM13 2h1v1h-1zM2 3h3v1h-3zM13 3h1v1h-1zM2 4h1v1h-1zM9 4h2v1h-2zM13 4h1v1h-1zM2 5h1v1h-1zM9 5h2v1h-2zM13 5h1v1h-1zM2 6h1v1h-1zM13 6h1v1h-1zM2 7h1v1h-1zM13 7h1v1h-1zM2 8h1v1h-1zM7 8h1v1h-1zM11 8h1v1h-1zM13 8h1v1h-1zM2 9h1v1h-1zM6 9h1v1h-1zM8 9h1v1h-1zM10 9h1v1h-1zM12 9h2v1h-2zM2 10h2v1h-2zM5 10h1v1h-1zM9 10h1v1h-1zM13 10h1v1h-1zM2 11h1v1h-1zM4 11h1v1h-1zM10 11h1v1h-1zM13 11h1v1h-1zM2 12h1v1h-1zM13 12h1v1h-1zM2 13h1v1h-1zM13 13h1v1h-1zM2 14h12v1h-12z"/></svg>
<div class="t" style="left:1012px;top:88px;width:60px;justify-content:flex-start;color:#dadaf4;"><span style="letter-spacing:1.358px;transform:scaleX(0.78);transform-origin:left;margin-left:0.00px">Gen Size:</span></div>
<div class="r" style="left:1072px;top:84px;width:24px;height:24px;background:#3e4350;border:2px solid #ab9bd3;"></div>
<svg class="i" style="left:1080px;top:91px" width="6" height="11"><path fill="#dadaf4" d="M0 5h1v1h-1zM1 4h1v3h-1zM2 3h1v5h-1zM3 2h1v7h-1zM4 1h1v9h-1zM5 0h1v11h-1z"/></svg>
<div class="r" style="left:1098px;top:84px;width:44px;height:24px;border:1px solid #ab9bd3;"></div>
<div class="t" style="left:1098px;top:88px;width:44px;justify-content:center;color:#dadaf4;"><span style="letter-spacing:0.284px;transform:scaleX(0.78);transform-origin:center;margin-left:-1.29px">16</span></div>
<div class="r" style="left:1144px;top:84px;width:24px;height:24px;background:#3e4350;border:2px solid #ab9bd3;"></div>
<svg class="i" style="left:1154px;top:91px" width="6" height="11"><path fill="#dadaf4" d="M0 0h1v11h-1zM1 1h1v9h-1zM2 2h1v7h-1zM3 3h1v5h-1zM4 4h1v3h-1zM5 5h1v1h-1z"/></svg>
<div class="r" style="left:1192px;top:84px;width:24px;height:24px;background:#f4b7c7;border:2px solid #ee84a0;"></div>
<svg class="i" style="left:1196px;top:88px" width="16" height="16" viewBox="0 0 16 16"><path fill="#b7657b" d="M7 1h1v1h-1zM6 2h3v1h-3zM6 3h1v1h-1zM8 3h2v1h-2zM5 4h1v1h-1zM8 4h2v1h-2zM5 5h1v1h-1zM9 5h2v1h-2zM4 6h1v1h-1zM9 6h2v1h-2zM4 7h1v1h-1zM10 7h2v1h-2zM3 8h1v1h-1zM10 8h2v1h-2zM3 9h9v1h-9zM2 10h1v1h-1zM11 10h2v1h-2zM2 11h1v1h-1zM12 11h2v1h-2zM1 12h1v1h-1zM12 12h2v1h-2zM1 13h1v1h-1zM12 13h3v1h-3zM0 14h4v1h-4zM11 14h5v1h-5z"/></svg>
<div class="r" style="left:1220px;top:84px;width:24px;height:24px;background:#6b798d;border:2px solid #8fa2bd;"></div>
<svg class="i" style="left:1224px;top:88px" width="16" height="16" viewBox="0 0 16 16"><path fill="#8292a9" d="M4 1h10v1h-10zM4 2h1v1h-1zM13 2h1v1h-1zM2 3h3v1h-3zM13 3h1v1h-1zM2 4h1v1h-1zM13 4h1v1h-1zM2 5h1v1h-1zM13 5h1v1h-1zM2 6h1v1h-1zM13 6h1v1h-1zM2 7h1v1h-1zM13 7h1v1h-1zM2 8h1v1h-1zM7 8h1v1h-1zM11 8h1v1h-1zM13 8h1v1h-1zM2 9h1v1h-1zM8 9h1v1h-1zM10 9h1v1h-1zM13 9h1v1h-1zM2 10h1v1h-1zM9 10h1v1h-1zM13 10h1v1h-1zM2 11h1v1h-1zM8 11h1v1h-1zM10 11h1v1h-1zM13 11h1v1h-1zM2 12h1v1h-1zM7 12h1v1h-1zM11 12h1v1h-1zM13 12h1v1h-1zM2 13h1v1h-1zM13 13h1v1h-1zM2 14h12v1h-12z"/></svg>
<div class="t" style="left:1258px;top:88px;width:60px;justify-content:flex-start;color:#dadaf4;"><span style="letter-spacing:2.047px;transform:scaleX(0.78);transform-origin:left;margin-left:0.00px">Charset:</span></div>
<div class="r" style="left:1312px;top:84px;width:84px;height:24px;background:#3e4350;border:1px solid #ab9bd3;"></div>
<div class="t" style="left:1312px;top:88px;width:84px;justify-content:center;color:#dadaf4;"><span style="letter-spacing:1.595px;transform:scaleX(0.78);transform-origin:center;margin-left:-0.78px">ISO-8859-15</span></div>
<div class="r" style="left:1398px;top:84px;width:32px;height:24px;background:#3e4350;border:1px solid #ab9bd3;"></div>
<div class="t" style="left:1398px;top:88px;width:32px;justify-content:center;color:#dadaf4;"><span style="letter-spacing:3.785px;transform:scaleX(0.78);transform-origin:center;margin-left:0.08px">2/2</span></div>
<div class="t" style="left:1456px;top:88px;width:80px;justify-content:flex-start;color:#dadaf4;"><span style="letter-spacing:2.165px;transform:scaleX(0.78);transform-origin:left;margin-left:0.00px">Shapes rec:</span></div>
<div class="r" style="left:1538px;top:84px;width:24px;height:24px;background:#3e4350;border:2px solid #ab9bd3;"></div>
<svg class="i" style="left:1542px;top:88px" width="16" height="16" viewBox="0 0 16 16"><path fill="#dadaf4" d="M2 2h12v1h-12zM2 3h1v1h-1zM13 3h1v1h-1zM2 4h1v1h-1zM13 4h1v1h-1zM2 5h1v1h-1zM13 5h1v1h-1zM2 6h1v1h-1zM13 6h1v1h-1zM2 7h1v1h-1zM13 7h1v1h-1zM2 8h1v1h-1zM13 8h1v1h-1zM2 9h1v1h-1zM9 9h5v1h-5zM2 10h1v1h-1zM9 10h5v1h-5zM2 11h1v1h-1zM9 11h5v1h-5zM2 12h1v1h-1zM9 12h5v1h-5zM2 13h12v1h-12z"/></svg>
<div class="r" style="left:1566px;top:84px;width:24px;height:24px;background:#3e4350;border:2px solid #ab9bd3;"></div>
<svg class="i" style="left:1570px;top:88px" width="16" height="16" viewBox="0 0 16 16"><path fill="#dadaf4" d="M2 2h12v1h-12zM2 3h1v1h-1zM12 3h2v1h-2zM2 4h1v1h-1zM11 4h1v1h-1zM13 4h1v1h-1zM2 5h1v1h-1zM10 5h1v1h-1zM13 5h1v1h-1zM2 6h1v1h-1zM9 6h1v1h-1zM13 6h1v1h-1zM2 7h1v1h-1zM8 7h1v1h-1zM13 7h1v1h-1zM2 8h1v1h-1zM7 8h1v1h-1zM13 8h1v1h-1zM2 9h1v1h-1zM6 9h1v1h-1zM13 9h1v1h-1zM2 10h1v1h-1zM5 10h1v1h-1zM13 10h1v1h-1zM2 11h1v1h-1zM4 11h1v1h-1zM13 11h1v1h-1zM2 12h2v1h-2zM13 12h1v1h-1zM2 13h12v1h-12z"/></svg>
<div class="r" style="left:1594px;top:84px;width:24px;height:24px;background:#3e4350;border:1px solid #ab9bd3;"></div>
<svg class="i" style="left:1598px;top:88px" width="16" height="16" viewBox="0 0 16 16"><path fill="#dadaf4" d="M2 2h12v1h-12zM2 3h1v1h-1zM13 3h1v1h-1zM2 4h1v1h-1zM13 4h1v1h-1zM2 5h1v1h-1zM13 5h1v1h-1zM2 6h1v1h-1zM13 6h1v1h-1zM2 7h1v1h-1zM13 7h1v1h-1zM2 8h1v1h-1zM13 8h1v1h-1zM2 9h1v1h-1zM13 9h1v1h-1zM2 10h1v1h-1zM13 10h1v1h-1zM2 11h1v1h-1zM13 11h1v1h-1zM2 12h1v1h-1zM13 12h1v1h-1zM2 13h12v1h-12z"/></svg>
<div class="r" style="left:1192px;top:112px;width:165px;height:24px;background:#5b5b81;border:1px solid #84adb7;"></div>
<div class="t" style="left:1198px;top:116px;width:160px;justify-content:flex-start;color:#dadaf4;"><span style="letter-spacing:2.235px;transform:scaleX(0.78);transform-origin:left;margin-left:0.00px">Load custom charset file</span></div>
<div class="r" style="left:1014px;top:202px;width:512px;height:256px;background:#000;border:1px solid #a01e30;"></div>
<div class="r" style="left:1523px;top:455px;width:3px;height:3px;background:#ff8c8c;"></div>
<div class="r" style="left:1523px;top:455px;width:2px;height:2px;background:#fff;"></div>
<div class="at" style="left:1014px;top:203px;width:512px"><span style="left:15.2px;top:0px">!</span><span style="left:24.4px;top:0px">&quot;</span><span style="left:36.1px;top:0px">#</span><span style="left:50.4px;top:0px">$</span><span style="left:64.2px;top:0px">%</span><span style="left:81.7px;top:0px">&amp;</span><span style="left:96.8px;top:0px">&#x27;</span><span style="left:105.8px;top:0px">(</span><span style="left:116.8px;top:0px">)</span><span style="left:128.5px;top:0px">*</span><span style="left:140.7px;top:-2px">+</span><span style="left:153.2px;top:-8px">,</span><span style="left:163.8px;top:-5px">-</span><span style="left:174.2px;top:-8px">.</span><span style="left:185.2px;top:0px">/</span><span style="left:195.4px;top:0px">0</span><span style="left:208.0px;top:0px">1</span><span style="left:220.4px;top:0px">2</span><span style="left:233.0px;top:0px">3</span><span style="left:245.4px;top:0px">4</span><span style="left:258.4px;top:0px">5</span><span style="left:271.4px;top:0px">6</span><span style="left:284.1px;top:0px">7</span><span style="left:297.2px;top:0px">8</span><span style="left:310.4px;top:0px">9</span><span style="left:323.2px;top:-2px">:</span><span style="left:333.2px;top:-2px">;</span><span style="left:341.9px;top:-2px">&lt;</span><span style="left:353.9px;top:-2px">=</span><span style="left:366.2px;top:-2px">&gt;</span><span style="left:378.4px;top:0px">?</span><span style="left:390.2px;top:0px">@</span><span style="left:407.1px;top:0px">A</span><span style="left:421.2px;top:0px">B</span><span style="left:434.8px;top:0px">C</span><span style="left:448.3px;top:0px">D</span><span style="left:461.7px;top:0px">E</span><span style="left:475.0px;top:0px">F</span><span style="left:487.7px;top:0px">G</span></div>
<div class="at" style="left:1014px;top:227px;width:512px"><span style="left:2.3px;top:0px">H</span><span style="left:16.6px;top:0px">I</span><span style="left:26.5px;top:0px">J</span><span style="left:39.3px;top:0px">K</span><span style="left:53.9px;top:0px">L</span><span style="left:67.5px;top:0px">M</span><span style="left:83.5px;top:0px">N</span><span style="left:97.1px;top:0px">O</span><span style="left:111.6px;top:0px">P</span><span style="left:124.8px;top:0px">Q</span><span style="left:139.0px;top:0px">R</span><span style="left:153.3px;top:0px">S</span><span style="left:167.5px;top:0px">T</span><span style="left:180.6px;top:0px">U</span><span style="left:194.9px;top:0px">V</span><span style="left:208.4px;top:0px">W</span><span style="left:225.6px;top:0px">X</span><span style="left:239.4px;top:0px">Y</span><span style="left:253.7px;top:0px">Z</span><span style="left:268.2px;top:0px">[</span><span style="left:279.6px;top:0px">\</span><span style="left:291.0px;top:0px">]</span><span style="left:301.7px;top:0px">^</span><span style="left:314.5px;top:-8px">_</span><span style="left:327.8px;top:0px">`</span><span style="left:337.8px;top:-2px">a</span><span style="left:350.6px;top:0px">b</span><span style="left:363.9px;top:-2px">c</span><span style="left:376.4px;top:0px">d</span><span style="left:389.3px;top:-2px">e</span><span style="left:403.5px;top:0px">f</span><span style="left:414.0px;top:-2px">g</span><span style="left:426.9px;top:0px">h</span><span style="left:440.0px;top:0px">i</span><span style="left:449.9px;top:0px">j</span><span style="left:460.0px;top:0px">k</span><span style="left:472.7px;top:0px">l</span><span style="left:481.6px;top:-2px">m</span></div>
<div class="at" style="left:1014px;top:251px;width:512px"><span style="left:2.4px;top:-2px">n</span><span style="left:15.3px;top:-2px">o</span><span style="left:28.2px;top:-2px">p</span><span style="left:41.1px;top:-2px">q</span><span style="left:54.9px;top:-2px">r</span><span style="left:66.2px;top:-2px">s</span><span style="left:80.1px;top:0px">t</span><span style="left:90.7px;top:-2px">u</span><span style="left:103.9px;top:-2px">v</span><span style="left:117.4px;top:-2px">w</span><span style="left:133.7px;top:-2px">x</span><span style="left:146.6px;top:-2px">y</span><span style="left:159.5px;top:-2px">z</span><span style="left:173.0px;top:0px">{</span><span style="left:183.9px;top:0px">|</span><span style="left:193.8px;top:0px">}</span><span style="left:205.1px;top:-3px">~</span><span style="left:218.1px;top:-2px">¡</span><span style="left:227.6px;top:-1px">¢</span><span style="left:241.0px;top:0px">£</span><span style="left:255.3px;top:0px">€</span><span style="left:270.2px;top:0px">¥</span><span style="left:283.9px;top:3px">Š</span><span style="left:298.0px;top:0px">§</span><span style="left:311.3px;top:1px">š</span><span style="left:324.1px;top:0px">©</span><span style="left:340.4px;top:0px">ª</span><span style="left:352.1px;top:-3px">«</span><span style="left:365.8px;top:-4px">¬</span><span style="left:379.7px;top:0px">®</span><span style="left:395.2px;top:0px">¯</span><span style="left:408.6px;top:0px">°</span><span style="left:420.1px;top:-2px">±</span><span style="left:433.9px;top:0px">²</span><span style="left:445.8px;top:0px">³</span><span style="left:456.9px;top:3px">Ž</span><span style="left:471.0px;top:-2px">µ</span><span style="left:485.6px;top:0px">¶</span><span style="left:498.8px;top:-4px">·</span></div>
<div class="at" style="left:1014px;top:275px;width:512px"><span style="left:2.8px;top:1px">ž</span><span style="left:15.4px;top:0px">¹</span><span style="left:26.2px;top:0px">º</span><span style="left:38.0px;top:-3px">»</span><span style="left:51.2px;top:0px">Œ</span><span style="left:69.1px;top:-2px">œ</span><span style="left:86.4px;top:3px">Ÿ</span><span style="left:100.3px;top:-2px">¿</span><span style="left:113.5px;top:3px">À</span><span style="left:127.6px;top:3px">Á</span><span style="left:141.6px;top:3px">Â</span><span style="left:155.6px;top:3px">Ã</span><span style="left:169.7px;top:3px">Ä</span><span style="left:183.7px;top:3px">Å</span><span style="left:197.6px;top:0px">Æ</span><span style="left:215.5px;top:0px">Ç</span><span style="left:229.9px;top:3px">È</span><span style="left:243.9px;top:3px">É</span><span style="left:258.0px;top:3px">Ê</span><span style="left:272.0px;top:3px">Ë</span><span style="left:287.1px;top:3px">Ì</span><span style="left:298.1px;top:3px">Í</span><span style="left:309.1px;top:3px">Î</span><span style="left:320.2px;top:3px">Ï</span><span style="left:330.3px;top:0px">Ð</span><span style="left:344.9px;top:3px">Ñ</span><span style="left:358.6px;top:3px">Ò</span><span style="left:372.6px;top:3px">Ó</span><span style="left:386.6px;top:3px">Ô</span><span style="left:400.7px;top:3px">Õ</span><span style="left:414.7px;top:3px">Ö</span><span style="left:429.5px;top:-2px">×</span><span style="left:442.3px;top:0px">Ø</span><span style="left:457.2px;top:3px">Ù</span><span style="left:471.3px;top:3px">Ú</span><span style="left:485.3px;top:3px">Û</span></div>
<div class="at" style="left:1014px;top:299px;width:512px"><span style="left:2.3px;top:3px">Ü</span><span style="left:16.4px;top:3px">Ý</span><span style="left:29.7px;top:0px">Þ</span><span style="left:43.4px;top:0px">ß</span><span style="left:57.0px;top:1px">à</span><span style="left:69.8px;top:1px">á</span><span style="left:82.6px;top:1px">â</span><span style="left:95.3px;top:1px">ã</span><span style="left:108.1px;top:1px">ä</span><span style="left:120.9px;top:1px">å</span><span style="left:133.5px;top:-2px">æ</span><span style="left:150.8px;top:-2px">ç</span><span style="left:163.2px;top:1px">è</span><span style="left:176.0px;top:1px">é</span><span style="left:188.8px;top:1px">ê</span><span style="left:201.6px;top:1px">ë</span><span style="left:215.2px;top:1px">ì</span><span style="left:226.0px;top:1px">í</span><span style="left:236.8px;top:1px">î</span><span style="left:247.6px;top:1px">ï</span><span style="left:257.6px;top:0px">ð</span><span style="left:270.4px;top:1px">ñ</span><span style="left:283.2px;top:1px">ò</span><span style="left:296.0px;top:1px">ó</span><span style="left:308.8px;top:1px">ô</span><span style="left:321.5px;top:1px">õ</span><span style="left:334.3px;top:1px">ö</span><span style="left:347.2px;top:-2px">÷</span><span style="left:360.0px;top:-2px">ø</span><span style="left:373.7px;top:1px">ù</span><span style="left:386.5px;top:1px">ú</span><span style="left:399.2px;top:1px">û</span><span style="left:412.0px;top:1px">ü</span><span style="left:425.2px;top:1px">ý</span><span style="left:437.6px;top:0px">þ</span><span style="left:450.8px;top:1px">ÿ</span></div>
<div class="r" style="left:908px;top:520px;width:724px;height:1px;background:#84adb7;"></div>
<div class="r" style="left:918px;top:540px;width:704px;height:56px;border:1px solid #84adb7;"></div>
<div class="r" style="left:926px;top:540px;width:144px;height:1px;background:#5b5b81;"></div>
<div class="t" style="left:930px;top:533px;width:300px;justify-content:flex-start;color:#84adb7;"><span style="letter-spacing:2.458px;transform:scaleX(0.78);transform-origin:left;margin-left:0.00px">Text Drawing Options</span></div>
<div class="t" style="left:932px;top:560px;width:60px;justify-content:flex-start;color:#dadaf4;"><span style="letter-spacing:1.617px;transform:scaleX(0.78);transform-origin:left;margin-left:0.00px">Font Size:</span></div>
<div class="r" style="left:996px;top:556px;width:24px;height:24px;background:#3e4350;border:2px solid #ab9bd3;"></div>
<svg class="i" style="left:1004px;top:563px" width="6" height="11"><path fill="#dadaf4" d="M0 5h1v1h-1zM1 4h1v3h-1zM2 3h1v5h-1zM3 2h1v7h-1zM4 1h1v9h-1zM5 0h1v11h-1z"/></svg>
<div class="r" style="left:1022px;top:556px;width:48px;height:24px;border:1px solid #ab9bd3;"></div>
<div class="t" style="left:1022px;top:560px;width:48px;justify-content:center;color:#dadaf4;"><span style="letter-spacing:0.284px;transform:scaleX(0.78);transform-origin:center;margin-left:-1.29px">16</span></div>
<div class="r" style="left:1072px;top:556px;width:24px;height:24px;background:#3e4350;border:2px solid #ab9bd3;"></div>
<svg class="i" style="left:1082px;top:563px" width="6" height="11"><path fill="#dadaf4" d="M0 0h1v11h-1zM1 1h1v9h-1zM2 2h1v7h-1zM3 3h1v5h-1zM4 4h1v3h-1zM5 5h1v1h-1z"/></svg>
<div class="t" style="left:1107px;top:560px;width:60px;justify-content:flex-start;color:#dadaf4;"><span style="letter-spacing:1.399px;transform:scaleX(0.78);transform-origin:left;margin-left:0.00px">Spacing:</span></div>
<div class="r" style="left:1162px;top:556px;width:24px;height:24px;background:#3e4350;border:2px solid #ab9bd3;"></div>
<svg class="i" style="left:1170px;top:563px" width="6" height="11"><path fill="#dadaf4" d="M0 5h1v1h-1zM1 4h1v3h-1zM2 3h1v5h-1zM3 2h1v7h-1zM4 1h1v9h-1zM5 0h1v11h-1z"/></svg>
<div class="r" style="left:1188px;top:556px;width:48px;height:24px;border:1px solid #ab9bd3;"></div>
<div class="t" style="left:1188px;top:560px;width:48px;justify-content:center;color:#dadaf4;"><span style="letter-spacing:0px;transform:scaleX(0.78);transform-origin:center;margin-left:-1.40px">1</span></div>
<div class="r" style="left:1238px;top:556px;width:24px;height:24px;background:#3e4350;border:2px solid #ab9bd3;"></div>
<svg class="i" style="left:1248px;top:563px" width="6" height="11"><path fill="#dadaf4" d="M0 0h1v11h-1zM1 1h1v9h-1zM2 2h1v7h-1zM3 3h1v5h-1zM4 4h1v3h-1zM5 5h1v1h-1z"/></svg>
<div class="r" style="left:1276px;top:554px;width:336px;height:28px;border:1px solid #ab9bd3;"></div>
<div class="t" style="left:1280px;top:560px;width:100px;justify-content:flex-start;color:#dadaf4;"><span style="letter-spacing:2.224px;transform:scaleX(0.78);transform-origin:left;margin-left:0.00px">sample text</span></div>
<div class="r" style="left:1640px;top:52px;width:160px;height:24px;background:#3e4350;border:1px solid #ab9bd3;"></div>
<svg class="i" style="left:1649px;top:56px" width="16" height="16" viewBox="0 0 16 16"><path fill="#dadaf4" d="M7 1h1v1h-1zM6 2h3v1h-3zM6 3h1v1h-1zM8 3h2v1h-2zM5 4h1v1h-1zM8 4h2v1h-2zM5 5h1v1h-1zM9 5h2v1h-2zM4 6h1v1h-1zM9 6h2v1h-2zM4 7h1v1h-1zM10 7h2v1h-2zM3 8h1v1h-1zM10 8h2v1h-2zM3 9h9v1h-9zM2 10h1v1h-1zM11 10h2v1h-2zM2 11h1v1h-1zM12 11h2v1h-2zM1 12h1v1h-1zM12 12h2v1h-2zM1 13h1v1h-1zM12 13h3v1h-3zM0 14h4v1h-4zM11 14h5v1h-5z"/></svg>
<div class="t" style="left:1668px;top:56px;width:60px;justify-content:flex-start;color:#dadaf4;"><span style="letter-spacing:1.872px;transform:scaleX(0.78);transform-origin:left;margin-left:0.00px">Font</span></div>
<div class="r" style="left:1640px;top:75px;width:160px;height:533px;border:1px solid #ab9bd3;"></div>
<div class="t" style="left:1642px;top:84px;width:155px;justify-content:center;color:#dadaf4;"><span style="letter-spacing:2.17px;transform:scaleX(0.78);transform-origin:center;margin-left:-0.55px">default</span></div>
<div class="r" style="left:1642px;top:108px;width:155px;height:28px;background:#966ec0;border:1px solid #d5c8db;"></div>
<div class="t" style="left:1642px;top:114px;width:155px;justify-content:center;color:#d7ccf7;"><span style="letter-spacing:2.211px;transform:scaleX(0.78);transform-origin:center;margin-left:-0.54px">Cartridge</span></div>
<div class="t" style="left:1642px;top:144px;width:155px;justify-content:center;color:#dadaf4;"><span style="letter-spacing:1.932px;transform:scaleX(0.78);transform-origin:center;margin-left:-0.65px">hello-world</span></div>
<div class="t" style="left:1642px;top:174px;width:155px;justify-content:center;color:#dadaf4;"><span style="letter-spacing:1.602px;transform:scaleX(0.78);transform-origin:center;margin-left:-0.78px">homespun</span></div>
<div class="t" style="left:1642px;top:204px;width:155px;justify-content:center;color:#dadaf4;"><span style="letter-spacing:2.118px;transform:scaleX(0.78);transform-origin:center;margin-left:-0.57px">Kyrou7Wide</span></div>
<div class="t" style="left:1642px;top:234px;width:155px;justify-content:center;color:#dadaf4;"><span style="letter-spacing:2.04px;transform:scaleX(0.78);transform-origin:center;margin-left:-0.60px">Mecha</span></div>
<div class="t" style="left:1642px;top:264px;width:155px;justify-content:center;color:#dadaf4;"><span style="letter-spacing:1.647px;transform:scaleX(0.78);transform-origin:center;margin-left:-0.76px">PixelIntv</span></div>
<div class="t" style="left:1642px;top:294px;width:155px;justify-content:center;color:#dadaf4;"><span style="letter-spacing:1.967px;transform:scaleX(0.78);transform-origin:center;margin-left:-0.63px">PixelOperator</span></div>
<div class="t" style="left:1642px;top:324px;width:155px;justify-content:center;color:#dadaf4;"><span style="letter-spacing:2.529px;transform:scaleX(0.78);transform-origin:center;margin-left:-0.41px">v5easter</span></div>
<div class="t" style="left:1642px;top:354px;width:155px;justify-content:center;color:#dadaf4;"><span style="letter-spacing:1.894px;transform:scaleX(0.78);transform-origin:center;margin-left:-0.66px">v5loxical</span></div>
<div class="t" style="left:1642px;top:384px;width:155px;justify-content:center;color:#dadaf4;"><span style="letter-spacing:1.775px;transform:scaleX(0.78);transform-origin:center;margin-left:-0.71px">Westington</span></div>
<div class="t" style="left:1642px;top:414px;width:155px;justify-content:center;color:#dadaf4;"><span style="letter-spacing:2.839px;transform:scaleX(0.78);transform-origin:center;margin-left:-0.29px">2a03</span></div>
<div class="t" style="left:1642px;top:444px;width:155px;justify-content:center;color:#dadaf4;"><span style="letter-spacing:1.658px;transform:scaleX(0.78);transform-origin:center;margin-left:-0.75px">GMSN</span></div>
<div class="t" style="left:1642px;top:474px;width:155px;justify-content:center;color:#dadaf4;"><span style="letter-spacing:1.561px;transform:scaleX(0.78);transform-origin:center;margin-left:-0.79px">CozetteVector</span></div>
<div class="t" style="left:1642px;top:504px;width:155px;justify-content:center;color:#dadaf4;"><span style="letter-spacing:3.336px;transform:scaleX(0.78);transform-origin:center;margin-left:-0.10px">Fairfax</span></div>
<div class="t" style="left:1642px;top:534px;width:155px;justify-content:center;color:#dadaf4;"><span style="letter-spacing:2.343px;transform:scaleX(0.78);transform-origin:center;margin-left:-0.49px">OwreKynge</span></div>
<div class="r" style="left:12px;top:642px;width:8px;height:8px;background:#ab9bd3;"></div>
<div class="r" style="left:20px;top:642px;width:8px;height:8px;background:#3e4350;"></div>
<div class="r" style="left:28px;top:642px;width:8px;height:8px;background:#dadaf4;"></div>
<div class="r" style="left:36px;top:642px;width:8px;height:8px;background:#ee84a0;"></div>
<div class="r" style="left:44px;top:642px;width:8px;height:8px;background:#f4b7c7;"></div>
<div class="r" style="left:52px;top:642px;width:8px;height:8px;background:#b7657b;"></div>
<div class="r" style="left:60px;top:642px;width:8px;height:8px;background:#d5c8db;"></div>
<div class="r" style="left:68px;top:642px;width:8px;height:8px;background:#966ec0;"></div>
<div class="r" style="left:76px;top:642px;width:8px;height:8px;background:#d7ccf7;"></div>
<div class="r" style="left:84px;top:642px;width:8px;height:8px;background:#8fa2bd;"></div>
<div class="r" style="left:92px;top:642px;width:8px;height:8px;background:#6b798d;"></div>
<div class="r" style="left:100px;top:642px;width:8px;height:8px;background:#8292a9;"></div>
<div class="r" style="left:111px;top:636px;width:1701px;height:1px;background:#84adb7;"></div>
<div class="r" style="left:12px;top:656px;width:1800px;height:1px;background:#84adb7;"></div>
<div class="r" style="left:12px;top:695px;width:1800px;height:1px;background:#84adb7;"></div>
<div class="r" style="left:12px;top:734px;width:1800px;height:1px;background:#84adb7;"></div>
<div class="r" style="left:12px;top:773px;width:1800px;height:1px;background:#84adb7;"></div>
<div class="r" style="left:12px;top:812px;width:1800px;height:1px;background:#84adb7;"></div>
<div class="r" style="left:12px;top:656px;width:1px;height:157px;background:#84adb7;"></div>
<div class="r" style="left:111px;top:636px;width:1px;height:177px;background:#84adb7;"></div>
<div class="r" style="left:226px;top:636px;width:1px;height:177px;background:#84adb7;"></div>
<div class="r" style="left:341px;top:636px;width:1px;height:177px;background:#84adb7;"></div>
<div class="r" style="left:456px;top:636px;width:1px;height:177px;background:#84adb7;"></div>
<div class="r" style="left:671px;top:636px;width:1px;height:177px;background:#84adb7;"></div>
<div class="r" style="left:786px;top:636px;width:1px;height:177px;background:#84adb7;"></div>
<div class="r" style="left:901px;top:636px;width:1px;height:177px;background:#84adb7;"></div>
<div class="r" style="left:1016px;top:636px;width:1px;height:177px;background:#84adb7;"></div>
<div class="r" style="left:1231px;top:636px;width:1px;height:177px;background:#84adb7;"></div>
<div class="r" style="left:1386px;top:636px;width:1px;height:177px;background:#84adb7;"></div>
<div class="r" style="left:1561px;top:636px;width:1px;height:177px;background:#84adb7;"></div>
<div class="r" style="left:1676px;top:636px;width:1px;height:177px;background:#84adb7;"></div>
<div class="r" style="left:1791px;top:636px;width:1px;height:177px;background:#84adb7;"></div>
<div class="r" style="left:564px;top:656px;width:1px;height:157px;background:#84adb7;"></div>
<div class="r" style="left:1124px;top:656px;width:1px;height:157px;background:#84adb7;"></div>
<div class="t" style="left:111px;top:639px;width:116px;justify-content:center;color:#dadaf4;"><span style="letter-spacing:1.87px;transform:scaleX(0.78);transform-origin:center;margin-left:-0.67px">LABEL</span></div>
<div class="t" style="left:226px;top:639px;width:116px;justify-content:center;color:#dadaf4;"><span style="letter-spacing:2.615px;transform:scaleX(0.78);transform-origin:center;margin-left:-0.38px">BUTTON</span></div>
<div class="t" style="left:341px;top:639px;width:116px;justify-content:center;color:#dadaf4;"><span style="letter-spacing:1.16px;transform:scaleX(0.78);transform-origin:center;margin-left:-0.95px">TOGGLE</span></div>
<div class="t" style="left:456px;top:639px;width:216px;justify-content:center;color:#dadaf4;"><span style="letter-spacing:0.732px;transform:scaleX(0.78);transform-origin:center;margin-left:-1.11px">CHECKBOX</span></div>
<div class="t" style="left:671px;top:639px;width:116px;justify-content:center;color:#dadaf4;"><span style="letter-spacing:0.711px;transform:scaleX(0.78);transform-origin:center;margin-left:-1.12px">SLIDER</span></div>
<div class="t" style="left:786px;top:639px;width:116px;justify-content:center;color:#dadaf4;"><span style="letter-spacing:1.014px;transform:scaleX(0.78);transform-origin:center;margin-left:-1.00px">SLIDERBAR</span></div>
<div class="t" style="left:901px;top:639px;width:116px;justify-content:center;color:#dadaf4;"><span style="letter-spacing:0.895px;transform:scaleX(0.78);transform-origin:center;margin-left:-1.05px">PROGRESSBAR</span></div>
<div class="t" style="left:1016px;top:639px;width:216px;justify-content:center;color:#dadaf4;"><span style="letter-spacing:0.932px;transform:scaleX(0.78);transform-origin:center;margin-left:-1.04px">TOGGLESLIDER</span></div>
<div class="t" style="left:1231px;top:639px;width:156px;justify-content:center;color:#dadaf4;"><span style="letter-spacing:1.498px;transform:scaleX(0.78);transform-origin:center;margin-left:-0.82px">COMBOBOX</span></div>
<div class="t" style="left:1386px;top:639px;width:176px;justify-content:center;color:#dadaf4;"><span style="letter-spacing:1.178px;transform:scaleX(0.78);transform-origin:center;margin-left:-0.94px">DROPDOWNBOX</span></div>
<div class="t" style="left:1561px;top:639px;width:116px;justify-content:center;color:#dadaf4;"><span style="letter-spacing:2.024px;transform:scaleX(0.78);transform-origin:center;margin-left:-0.61px">TEXTBOX</span></div>
<div class="t" style="left:1676px;top:639px;width:116px;justify-content:center;color:#dadaf4;"><span style="letter-spacing:1.848px;transform:scaleX(0.78);transform-origin:center;margin-left:-0.68px">VALUEBOX</span></div>
<div class="t" style="left:1791px;top:639px;width:116px;justify-content:center;color:#dadaf4;"><span style="letter-spacing:0.679px;transform:scaleX(0.78);transform-origin:center;margin-left:-1.14px">SPINNER</span></div>
<div class="t" style="left:40px;top:668px;width:80px;justify-content:flex-start;color:#dadaf4;"><span style="letter-spacing:1.441px;transform:scaleX(0.78);transform-origin:left;margin-left:0.00px">NORMAL</span></div>
<svg class="i" style="left:136px;top:668px" width="16" height="16" viewBox="0 0 16 16"><path fill="#dadaf4" d="M4 1h10v1h-10zM4 2h1v1h-1zM13 2h1v1h-1zM2 3h3v1h-3zM13 3h1v1h-1zM2 4h1v1h-1zM13 4h1v1h-1zM2 5h1v1h-1zM13 5h1v1h-1zM2 6h1v1h-1zM4 6h8v1h-8zM13 6h1v1h-1zM2 7h1v1h-1zM13 7h1v1h-1zM2 8h1v1h-1zM4 8h8v1h-8zM13 8h1v1h-1zM2 9h1v1h-1zM13 9h1v1h-1zM2 10h1v1h-1zM4 10h8v1h-8zM13 10h1v1h-1zM2 11h1v1h-1zM13 11h1v1h-1zM2 12h1v1h-1zM13 12h1v1h-1zM2 13h1v1h-1zM13 13h1v1h-1zM2 14h12v1h-12z"/></svg>
<div class="t" style="left:155px;top:668px;width:50px;justify-content:flex-start;color:#dadaf4;"><span style="letter-spacing:1.856px;transform:scaleX(0.78);transform-origin:left;margin-left:0.00px">Label</span></div>
<div class="r" style="left:234px;top:664px;width:100px;height:24px;background:#3e4350;border:2px solid #ab9bd3;"></div>
<svg class="i" style="left:255px;top:668px" width="16" height="16" viewBox="0 0 16 16"><path fill="#dadaf4" d="M1 1h13v1h-13zM1 2h1v1h-1zM5 2h1v1h-1zM10 2h1v1h-1zM14 2h1v1h-1zM1 3h1v1h-1zM5 3h1v1h-1zM10 3h1v1h-1zM14 3h1v1h-1zM1 4h1v1h-1zM5 4h6v1h-6zM14 4h1v1h-1zM1 5h1v1h-1zM14 5h1v1h-1zM1 6h1v1h-1zM14 6h1v1h-1zM1 7h1v1h-1zM3 7h10v1h-10zM14 7h1v1h-1zM1 8h1v1h-1zM3 8h1v1h-1zM12 8h1v1h-1zM14 8h1v1h-1zM1 9h1v1h-1zM3 9h1v1h-1zM5 9h6v1h-6zM12 9h1v1h-1zM14 9h1v1h-1zM1 10h1v1h-1zM3 10h1v1h-1zM12 10h1v1h-1zM14 10h1v1h-1zM1 11h1v1h-1zM3 11h1v1h-1zM12 11h1v1h-1zM14 11h1v1h-1zM1 12h1v1h-1zM3 12h10v1h-10zM14 12h1v1h-1zM1 13h1v1h-1zM14 13h1v1h-1zM1 14h14v1h-14z"/></svg>
<div class="t" style="left:274px;top:668px;width:50px;justify-content:flex-start;color:#dadaf4;"><span style="letter-spacing:2.073px;transform:scaleX(0.78);transform-origin:left;margin-left:0.00px">Button</span></div>
<div class="r" style="left:349px;top:664px;width:100px;height:24px;background:#3e4350;border:1px solid #ab9bd3;"></div>
<svg class="i" style="left:371px;top:668px" width="16" height="16" viewBox="0 0 16 16"><path fill="#dadaf4" d="M7 2h1v1h-1zM9 2h1v1h-1zM6 3h2v1h-2zM9 3h2v1h-2zM6 4h2v1h-2zM9 4h2v1h-2zM5 5h1v1h-1zM7 5h1v1h-1zM9 5h3v1h-3zM5 6h1v1h-1zM7 6h1v1h-1zM9 6h3v1h-3zM4 7h1v1h-1zM7 7h1v1h-1zM9 7h4v1h-4zM4 8h1v1h-1zM7 8h1v1h-1zM9 8h4v1h-4zM3 9h1v1h-1zM7 9h1v1h-1zM9 9h5v1h-5zM3 10h1v1h-1zM7 10h1v1h-1zM9 10h5v1h-5zM2 11h1v1h-1zM7 11h1v1h-1zM9 11h6v1h-6zM2 12h1v1h-1zM7 12h1v1h-1zM9 12h6v1h-6zM2 13h6v1h-6zM9 13h6v1h-6z"/></svg>
<div class="t" style="left:391px;top:668px;width:50px;justify-content:flex-start;color:#dadaf4;"><span style="letter-spacing:1.339px;transform:scaleX(0.78);transform-origin:left;margin-left:0.00px">Toggle</span></div>
<div class="r" style="left:466px;top:669px;width:15px;height:15px;border:1px solid #ab9bd3;"></div>
<div class="t" style="left:484px;top:668px;width:60px;justify-content:flex-start;color:#dadaf4;"><span style="letter-spacing:1.004px;transform:scaleX(0.78);transform-origin:left;margin-left:0.00px">NoCheck</span></div>
<div class="r" style="left:574px;top:669px;width:15px;height:15px;border:1px solid #ab9bd3;"></div>
<div class="r" style="left:576px;top:671px;width:11px;height:11px;background:#dadaf4;"></div>
<div class="t" style="left:592px;top:668px;width:60px;justify-content:flex-start;color:#dadaf4;"><span style="letter-spacing:1.15px;transform:scaleX(0.78);transform-origin:left;margin-left:0.00px">Checked</span></div>
<div class="r" style="left:679px;top:671px;width:100px;height:10px;background:#3e4350;border:1px solid #ab9bd3;"></div>
<div class="r" style="left:714px;top:673px;width:10px;height:6px;background:#966ec0;"></div>
<div class="r" style="left:794px;top:671px;width:100px;height:10px;background:#3e4350;border:1px solid #ab9bd3;"></div>
<div class="r" style="left:795px;top:673px;width:39px;height:6px;background:#966ec0;"></div>
<div class="r" style="left:909px;top:671px;width:100px;height:10px;border:1px solid #ab9bd3;"></div>
<div class="r" style="left:910px;top:673px;width:58px;height:6px;background:#966ec0;"></div>
<div class="r" style="left:909px;top:671px;width:59px;height:1px;background:#ee84a0;"></div>
<div class="r" style="left:909px;top:680px;width:59px;height:1px;background:#ee84a0;"></div>
<div class="r" style="left:909px;top:671px;width:1px;height:10px;background:#ee84a0;"></div>
<div class="r" style="left:1024px;top:664px;width:92px;height:24px;background:#3e4350;border:1px solid #ab9bd3;"></div>
<div class="r" style="left:1027px;top:667px;width:42px;height:18px;background:#966ec0;"></div>
<svg class="i" style="left:1027px;top:668px" width="16" height="16" viewBox="0 0 16 16"><path fill="#d7ccf7" d="M2 2h12v1h-12zM2 3h1v1h-1zM13 3h1v1h-1zM2 4h1v1h-1zM13 4h1v1h-1zM2 5h1v1h-1zM13 5h1v1h-1zM2 6h5v1h-5zM13 6h1v1h-1zM2 7h5v1h-5zM13 7h1v1h-1zM2 8h5v1h-5zM13 8h1v1h-1zM2 9h5v1h-5zM13 9h1v1h-1zM2 10h1v1h-1zM13 10h1v1h-1zM2 11h1v1h-1zM13 11h1v1h-1zM2 12h1v1h-1zM13 12h1v1h-1zM2 13h12v1h-12z"/></svg>
<div class="t" style="left:1046px;top:668px;width:30px;justify-content:flex-start;color:#d7ccf7;"><span style="letter-spacing:1.49px;transform:scaleX(0.78);transform-origin:left;margin-left:0.00px">OFF</span></div>
<div class="r" style="left:1132px;top:664px;width:92px;height:24px;background:#3e4350;border:1px solid #d5c8db;"></div>
<div class="r" style="left:1179px;top:667px;width:42px;height:18px;background:#966ec0;"></div>
<svg class="i" style="left:1182px;top:668px" width="16" height="16" viewBox="0 0 16 16"><path fill="#d7ccf7" d="M2 2h12v1h-12zM2 3h1v1h-1zM13 3h1v1h-1zM2 4h1v1h-1zM13 4h1v1h-1zM2 5h1v1h-1zM13 5h1v1h-1zM2 6h1v1h-1zM9 6h5v1h-5zM2 7h1v1h-1zM9 7h5v1h-5zM2 8h1v1h-1zM9 8h5v1h-5zM2 9h1v1h-1zM9 9h5v1h-5zM2 10h1v1h-1zM13 10h1v1h-1zM2 11h1v1h-1zM13 11h1v1h-1zM2 12h1v1h-1zM13 12h1v1h-1zM2 13h12v1h-12z"/></svg>
<div class="t" style="left:1201px;top:668px;width:30px;justify-content:flex-start;color:#d7ccf7;"><span style="letter-spacing:1.91px;transform:scaleX(0.78);transform-origin:left;margin-left:0.00px">ON</span></div>
<div class="r" style="left:1239px;top:664px;width:106px;height:24px;background:#3e4350;border:1px solid #ab9bd3;"></div>
<svg class="i" style="left:1254px;top:668px" width="16" height="16" viewBox="0 0 16 16"><path fill="#dadaf4" d="M8 1h1v1h-1zM8 2h1v1h-1zM5 3h2v1h-2zM8 3h1v1h-1zM10 3h1v1h-1zM4 4h1v1h-1zM6 4h1v1h-1zM8 4h1v1h-1zM10 4h2v1h-2zM3 5h1v1h-1zM6 5h1v1h-1zM8 5h1v1h-1zM10 5h3v1h-3zM2 6h1v1h-1zM6 6h1v1h-1zM8 6h1v1h-1zM10 6h4v1h-4zM1 7h1v1h-1zM6 7h1v1h-1zM8 7h1v1h-1zM10 7h5v1h-5zM1 8h1v1h-1zM6 8h1v1h-1zM8 8h1v1h-1zM10 8h5v1h-5zM2 9h1v1h-1zM6 9h1v1h-1zM8 9h1v1h-1zM10 9h4v1h-4zM3 10h1v1h-1zM6 10h1v1h-1zM8 10h1v1h-1zM10 10h3v1h-3zM4 11h1v1h-1zM6 11h1v1h-1zM8 11h1v1h-1zM10 11h2v1h-2zM5 12h2v1h-2zM8 12h1v1h-1zM10 12h1v1h-1zM8 13h1v1h-1zM8 14h1v1h-1z"/></svg>
<div class="t" style="left:1273px;top:668px;width:70px;justify-content:flex-start;color:#dadaf4;"><span style="letter-spacing:1.125px;transform:scaleX(0.78);transform-origin:left;margin-left:0.00px">ComboBox</span></div>
<div class="r" style="left:1347px;top:664px;width:32px;height:24px;background:#3e4350;border:1px solid #ab9bd3;"></div>
<div class="t" style="left:1347px;top:668px;width:32px;justify-content:center;color:#dadaf4;"><span style="letter-spacing:2.182px;transform:scaleX(0.78);transform-origin:center;margin-left:-0.55px">1/2</span></div>
<div class="r" style="left:1394px;top:664px;width:160px;height:24px;background:#3e4350;border:1px solid #ab9bd3;"></div>
<svg class="i" style="left:1424px;top:668px" width="16" height="16" viewBox="0 0 16 16"><path fill="#dadaf4" d="M7 1h2v1h-2zM6 2h1v1h-1zM9 2h1v1h-1zM5 3h1v1h-1zM10 3h1v1h-1zM4 4h1v1h-1zM11 4h1v1h-1zM3 5h1v1h-1zM12 5h1v1h-1zM3 6h10v1h-10zM1 8h14v1h-14zM3 10h10v1h-10zM4 11h8v1h-8zM5 12h6v1h-6zM6 13h4v1h-4zM7 14h2v1h-2z"/></svg>
<div class="t" style="left:1443px;top:668px;width:90px;justify-content:flex-start;color:#dadaf4;"><span style="letter-spacing:2.078px;transform:scaleX(0.78);transform-origin:left;margin-left:0.00px">DropdownBox</span></div>
<svg class="i" style="left:1537px;top:673px" width="11" height="6"><path fill="#dadaf4" d="M0 0h11v1h-11zM1 1h9v1h-9zM2 2h7v1h-7zM3 3h5v1h-5zM4 4h3v1h-3zM5 5h1v1h-1z"/></svg>
<div class="r" style="left:1569px;top:664px;width:100px;height:24px;border:1px solid #ab9bd3;"></div>
<div class="t" style="left:1573px;top:668px;width:60px;justify-content:flex-start;color:#dadaf4;"><span style="letter-spacing:2.361px;transform:scaleX(0.78);transform-origin:left;margin-left:0.00px">text box</span></div>
<div class="r" style="left:1684px;top:664px;width:100px;height:24px;border:1px solid #ab9bd3;"></div>
<div class="t" style="left:1684px;top:668px;width:100px;justify-content:center;color:#dadaf4;"><span style="letter-spacing:2.977px;transform:scaleX(0.78);transform-origin:center;margin-left:-0.24px">40</span></div>
<div class="r" style="left:1799px;top:664px;width:24px;height:24px;background:#3e4350;border:2px solid #ab9bd3;"></div>
<svg class="i" style="left:1807px;top:671px" width="6" height="11"><path fill="#dadaf4" d="M0 5h1v1h-1zM1 4h1v3h-1zM2 3h1v5h-1zM3 2h1v7h-1zM4 1h1v9h-1zM5 0h1v11h-1z"/></svg>
<div class="t" style="left:40px;top:707px;width:80px;justify-content:flex-start;color:#b7657b;"><span style="letter-spacing:0.946px;transform:scaleX(0.78);transform-origin:left;margin-left:0.00px">FOCUSED</span></div>
<svg class="i" style="left:136px;top:707px" width="16" height="16" viewBox="0 0 16 16"><path fill="#b7657b" d="M4 1h10v1h-10zM4 2h1v1h-1zM13 2h1v1h-1zM2 3h3v1h-3zM13 3h1v1h-1zM2 4h1v1h-1zM13 4h1v1h-1zM2 5h1v1h-1zM13 5h1v1h-1zM2 6h1v1h-1zM4 6h8v1h-8zM13 6h1v1h-1zM2 7h1v1h-1zM13 7h1v1h-1zM2 8h1v1h-1zM4 8h8v1h-8zM13 8h1v1h-1zM2 9h1v1h-1zM13 9h1v1h-1zM2 10h1v1h-1zM4 10h8v1h-8zM13 10h1v1h-1zM2 11h1v1h-1zM13 11h1v1h-1zM2 12h1v1h-1zM13 12h1v1h-1zM2 13h1v1h-1zM13 13h1v1h-1zM2 14h12v1h-12z"/></svg>
<div class="t" style="left:155px;top:707px;width:50px;justify-content:flex-start;color:#b7657b;"><span style="letter-spacing:1.856px;transform:scaleX(0.78);transform-origin:left;margin-left:0.00px">Label</span></div>
<div class="r" style="left:234px;top:703px;width:100px;height:24px;background:#f4b7c7;border:2px solid #ee84a0;"></div>
<svg class="i" style="left:255px;top:707px" width="16" height="16" viewBox="0 0 16 16"><path fill="#b7657b" d="M1 1h13v1h-13zM1 2h1v1h-1zM5 2h1v1h-1zM10 2h1v1h-1zM14 2h1v1h-1zM1 3h1v1h-1zM5 3h1v1h-1zM10 3h1v1h-1zM14 3h1v1h-1zM1 4h1v1h-1zM5 4h6v1h-6zM14 4h1v1h-1zM1 5h1v1h-1zM14 5h1v1h-1zM1 6h1v1h-1zM14 6h1v1h-1zM1 7h1v1h-1zM3 7h10v1h-10zM14 7h1v1h-1zM1 8h1v1h-1zM3 8h1v1h-1zM12 8h1v1h-1zM14 8h1v1h-1zM1 9h1v1h-1zM3 9h1v1h-1zM5 9h6v1h-6zM12 9h1v1h-1zM14 9h1v1h-1zM1 10h1v1h-1zM3 10h1v1h-1zM12 10h1v1h-1zM14 10h1v1h-1zM1 11h1v1h-1zM3 11h1v1h-1zM12 11h1v1h-1zM14 11h1v1h-1zM1 12h1v1h-1zM3 12h10v1h-10zM14 12h1v1h-1zM1 13h1v1h-1zM14 13h1v1h-1zM1 14h14v1h-14z"/></svg>
<div class="t" style="left:274px;top:707px;width:50px;justify-content:flex-start;color:#b7657b;"><span style="letter-spacing:2.073px;transform:scaleX(0.78);transform-origin:left;margin-left:0.00px">Button</span></div>
<div class="r" style="left:349px;top:703px;width:100px;height:24px;background:#f4b7c7;border:1px solid #ee84a0;"></div>
<svg class="i" style="left:371px;top:707px" width="16" height="16" viewBox="0 0 16 16"><path fill="#b7657b" d="M7 2h1v1h-1zM9 2h1v1h-1zM6 3h2v1h-2zM9 3h2v1h-2zM6 4h2v1h-2zM9 4h2v1h-2zM5 5h1v1h-1zM7 5h1v1h-1zM9 5h3v1h-3zM5 6h1v1h-1zM7 6h1v1h-1zM9 6h3v1h-3zM4 7h1v1h-1zM7 7h1v1h-1zM9 7h4v1h-4zM4 8h1v1h-1zM7 8h1v1h-1zM9 8h4v1h-4zM3 9h1v1h-1zM7 9h1v1h-1zM9 9h5v1h-5zM3 10h1v1h-1zM7 10h1v1h-1zM9 10h5v1h-5zM2 11h1v1h-1zM7 11h1v1h-1zM9 11h6v1h-6zM2 12h1v1h-1zM7 12h1v1h-1zM9 12h6v1h-6zM2 13h6v1h-6zM9 13h6v1h-6z"/></svg>
<div class="t" style="left:391px;top:707px;width:50px;justify-content:flex-start;color:#b7657b;"><span style="letter-spacing:1.339px;transform:scaleX(0.78);transform-origin:left;margin-left:0.00px">Toggle</span></div>
<div class="r" style="left:466px;top:708px;width:15px;height:15px;border:1px solid #ee84a0;"></div>
<div class="t" style="left:484px;top:707px;width:60px;justify-content:flex-start;color:#b7657b;"><span style="letter-spacing:1.004px;transform:scaleX(0.78);transform-origin:left;margin-left:0.00px">NoCheck</span></div>
<div class="r" style="left:574px;top:708px;width:15px;height:15px;border:1px solid #ee84a0;"></div>
<div class="r" style="left:576px;top:710px;width:11px;height:11px;background:#b7657b;"></div>
<div class="t" style="left:592px;top:707px;width:60px;justify-content:flex-start;color:#b7657b;"><span style="letter-spacing:1.15px;transform:scaleX(0.78);transform-origin:left;margin-left:0.00px">Checked</span></div>
<div class="r" style="left:679px;top:710px;width:100px;height:10px;background:#3e4350;border:1px solid #ee84a0;"></div>
<div class="r" style="left:714px;top:712px;width:10px;height:6px;background:#b7657b;"></div>
<div class="r" style="left:794px;top:710px;width:100px;height:10px;background:#3e4350;border:1px solid #ee84a0;"></div>
<div class="r" style="left:795px;top:712px;width:39px;height:6px;background:#b7657b;"></div>
<div class="r" style="left:909px;top:710px;width:100px;height:10px;border:1px solid #ab9bd3;"></div>
<div class="r" style="left:910px;top:712px;width:58px;height:6px;background:#966ec0;"></div>
<div class="r" style="left:909px;top:710px;width:59px;height:1px;background:#ee84a0;"></div>
<div class="r" style="left:909px;top:719px;width:59px;height:1px;background:#ee84a0;"></div>
<div class="r" style="left:909px;top:710px;width:1px;height:10px;background:#ee84a0;"></div>
<div class="r" style="left:1024px;top:703px;width:92px;height:24px;background:#3e4350;border:1px solid #ee84a0;"></div>
<div class="r" style="left:1027px;top:706px;width:42px;height:18px;background:#f4b7c7;"></div>
<svg class="i" style="left:1027px;top:707px" width="16" height="16" viewBox="0 0 16 16"><path fill="#b7657b" d="M2 2h12v1h-12zM2 3h1v1h-1zM13 3h1v1h-1zM2 4h1v1h-1zM13 4h1v1h-1zM2 5h1v1h-1zM13 5h1v1h-1zM2 6h5v1h-5zM13 6h1v1h-1zM2 7h5v1h-5zM13 7h1v1h-1zM2 8h5v1h-5zM13 8h1v1h-1zM2 9h5v1h-5zM13 9h1v1h-1zM2 10h1v1h-1zM13 10h1v1h-1zM2 11h1v1h-1zM13 11h1v1h-1zM2 12h1v1h-1zM13 12h1v1h-1zM2 13h12v1h-12z"/></svg>
<div class="t" style="left:1046px;top:707px;width:30px;justify-content:flex-start;color:#b7657b;"><span style="letter-spacing:1.49px;transform:scaleX(0.78);transform-origin:left;margin-left:0.00px">OFF</span></div>
<div class="r" style="left:1132px;top:703px;width:92px;height:24px;background:#3e4350;border:1px solid #ee84a0;"></div>
<div class="r" style="left:1179px;top:706px;width:42px;height:18px;background:#f4b7c7;"></div>
<svg class="i" style="left:1182px;top:707px" width="16" height="16" viewBox="0 0 16 16"><path fill="#b7657b" d="M2 2h12v1h-12zM2 3h1v1h-1zM13 3h1v1h-1zM2 4h1v1h-1zM13 4h1v1h-1zM2 5h1v1h-1zM13 5h1v1h-1zM2 6h1v1h-1zM9 6h5v1h-5zM2 7h1v1h-1zM9 7h5v1h-5zM2 8h1v1h-1zM9 8h5v1h-5zM2 9h1v1h-1zM9 9h5v1h-5zM2 10h1v1h-1zM13 10h1v1h-1zM2 11h1v1h-1zM13 11h1v1h-1zM2 12h1v1h-1zM13 12h1v1h-1zM2 13h12v1h-12z"/></svg>
<div class="t" style="left:1201px;top:707px;width:30px;justify-content:flex-start;color:#b7657b;"><span style="letter-spacing:1.91px;transform:scaleX(0.78);transform-origin:left;margin-left:0.00px">ON</span></div>
<div class="r" style="left:1239px;top:703px;width:106px;height:24px;background:#f4b7c7;border:1px solid #ee84a0;"></div>
<svg class="i" style="left:1254px;top:707px" width="16" height="16" viewBox="0 0 16 16"><path fill="#b7657b" d="M8 1h1v1h-1zM8 2h1v1h-1zM5 3h2v1h-2zM8 3h1v1h-1zM10 3h1v1h-1zM4 4h1v1h-1zM6 4h1v1h-1zM8 4h1v1h-1zM10 4h2v1h-2zM3 5h1v1h-1zM6 5h1v1h-1zM8 5h1v1h-1zM10 5h3v1h-3zM2 6h1v1h-1zM6 6h1v1h-1zM8 6h1v1h-1zM10 6h4v1h-4zM1 7h1v1h-1zM6 7h1v1h-1zM8 7h1v1h-1zM10 7h5v1h-5zM1 8h1v1h-1zM6 8h1v1h-1zM8 8h1v1h-1zM10 8h5v1h-5zM2 9h1v1h-1zM6 9h1v1h-1zM8 9h1v1h-1zM10 9h4v1h-4zM3 10h1v1h-1zM6 10h1v1h-1zM8 10h1v1h-1zM10 10h3v1h-3zM4 11h1v1h-1zM6 11h1v1h-1zM8 11h1v1h-1zM10 11h2v1h-2zM5 12h2v1h-2zM8 12h1v1h-1zM10 12h1v1h-1zM8 13h1v1h-1zM8 14h1v1h-1z"/></svg>
<div class="t" style="left:1273px;top:707px;width:70px;justify-content:flex-start;color:#b7657b;"><span style="letter-spacing:1.125px;transform:scaleX(0.78);transform-origin:left;margin-left:0.00px">ComboBox</span></div>
<div class="r" style="left:1347px;top:703px;width:32px;height:24px;background:#f4b7c7;border:1px solid #ee84a0;"></div>
<div class="t" style="left:1347px;top:707px;width:32px;justify-content:center;color:#b7657b;"><span style="letter-spacing:2.182px;transform:scaleX(0.78);transform-origin:center;margin-left:-0.55px">1/2</span></div>
<div class="r" style="left:1394px;top:703px;width:160px;height:24px;background:#f4b7c7;border:1px solid #ee84a0;"></div>
<svg class="i" style="left:1424px;top:707px" width="16" height="16" viewBox="0 0 16 16"><path fill="#b7657b" d="M7 1h2v1h-2zM6 2h1v1h-1zM9 2h1v1h-1zM5 3h1v1h-1zM10 3h1v1h-1zM4 4h1v1h-1zM11 4h1v1h-1zM3 5h1v1h-1zM12 5h1v1h-1zM3 6h10v1h-10zM1 8h14v1h-14zM3 10h10v1h-10zM4 11h8v1h-8zM5 12h6v1h-6zM6 13h4v1h-4zM7 14h2v1h-2z"/></svg>
<div class="t" style="left:1443px;top:707px;width:90px;justify-content:flex-start;color:#b7657b;"><span style="letter-spacing:2.078px;transform:scaleX(0.78);transform-origin:left;margin-left:0.00px">DropdownBox</span></div>
<svg class="i" style="left:1537px;top:712px" width="11" height="6"><path fill="#b7657b" d="M0 0h11v1h-11zM1 1h9v1h-9zM2 2h7v1h-7zM3 3h5v1h-5zM4 4h3v1h-3zM5 5h1v1h-1z"/></svg>
<div class="r" style="left:1569px;top:703px;width:100px;height:24px;border:1px solid #ee84a0;"></div>
<div class="t" style="left:1573px;top:707px;width:60px;justify-content:flex-start;color:#b7657b;"><span style="letter-spacing:2.361px;transform:scaleX(0.78);transform-origin:left;margin-left:0.00px">text box</span></div>
<div class="r" style="left:1684px;top:703px;width:100px;height:24px;border:1px solid #ee84a0;"></div>
<div class="t" style="left:1684px;top:707px;width:100px;justify-content:center;color:#b7657b;"><span style="letter-spacing:2.977px;transform:scaleX(0.78);transform-origin:center;margin-left:-0.24px">40</span></div>
<div class="r" style="left:1799px;top:703px;width:24px;height:24px;background:#f4b7c7;border:2px solid #ee84a0;"></div>
<svg class="i" style="left:1807px;top:710px" width="6" height="11"><path fill="#b7657b" d="M0 5h1v1h-1zM1 4h1v3h-1zM2 3h1v5h-1zM3 2h1v7h-1zM4 1h1v9h-1zM5 0h1v11h-1z"/></svg>
<div class="t" style="left:40px;top:746px;width:80px;justify-content:flex-start;color:#dadaf4;"><span style="letter-spacing:0.757px;transform:scaleX(0.78);transform-origin:left;margin-left:0.00px">PRESSED</span></div>
<svg class="i" style="left:136px;top:746px" width="16" height="16" viewBox="0 0 16 16"><path fill="#d7ccf7" d="M4 1h10v1h-10zM4 2h1v1h-1zM13 2h1v1h-1zM2 3h3v1h-3zM13 3h1v1h-1zM2 4h1v1h-1zM13 4h1v1h-1zM2 5h1v1h-1zM13 5h1v1h-1zM2 6h1v1h-1zM4 6h8v1h-8zM13 6h1v1h-1zM2 7h1v1h-1zM13 7h1v1h-1zM2 8h1v1h-1zM4 8h8v1h-8zM13 8h1v1h-1zM2 9h1v1h-1zM13 9h1v1h-1zM2 10h1v1h-1zM4 10h8v1h-8zM13 10h1v1h-1zM2 11h1v1h-1zM13 11h1v1h-1zM2 12h1v1h-1zM13 12h1v1h-1zM2 13h1v1h-1zM13 13h1v1h-1zM2 14h12v1h-12z"/></svg>
<div class="t" style="left:155px;top:746px;width:50px;justify-content:flex-start;color:#d7ccf7;"><span style="letter-spacing:1.856px;transform:scaleX(0.78);transform-origin:left;margin-left:0.00px">Label</span></div>
<div class="r" style="left:234px;top:742px;width:100px;height:24px;background:#966ec0;border:2px solid #d5c8db;"></div>
<svg class="i" style="left:255px;top:746px" width="16" height="16" viewBox="0 0 16 16"><path fill="#d7ccf7" d="M1 1h13v1h-13zM1 2h1v1h-1zM5 2h1v1h-1zM10 2h1v1h-1zM14 2h1v1h-1zM1 3h1v1h-1zM5 3h1v1h-1zM10 3h1v1h-1zM14 3h1v1h-1zM1 4h1v1h-1zM5 4h6v1h-6zM14 4h1v1h-1zM1 5h1v1h-1zM14 5h1v1h-1zM1 6h1v1h-1zM14 6h1v1h-1zM1 7h1v1h-1zM3 7h10v1h-10zM14 7h1v1h-1zM1 8h1v1h-1zM3 8h1v1h-1zM12 8h1v1h-1zM14 8h1v1h-1zM1 9h1v1h-1zM3 9h1v1h-1zM5 9h6v1h-6zM12 9h1v1h-1zM14 9h1v1h-1zM1 10h1v1h-1zM3 10h1v1h-1zM12 10h1v1h-1zM14 10h1v1h-1zM1 11h1v1h-1zM3 11h1v1h-1zM12 11h1v1h-1zM14 11h1v1h-1zM1 12h1v1h-1zM3 12h10v1h-10zM14 12h1v1h-1zM1 13h1v1h-1zM14 13h1v1h-1zM1 14h14v1h-14z"/></svg>
<div class="t" style="left:274px;top:746px;width:50px;justify-content:flex-start;color:#d7ccf7;"><span style="letter-spacing:2.073px;transform:scaleX(0.78);transform-origin:left;margin-left:0.00px">Button</span></div>
<div class="r" style="left:349px;top:742px;width:100px;height:24px;background:#966ec0;border:1px solid #d5c8db;"></div>
<svg class="i" style="left:371px;top:746px" width="16" height="16" viewBox="0 0 16 16"><path fill="#d7ccf7" d="M7 2h1v1h-1zM9 2h1v1h-1zM6 3h2v1h-2zM9 3h2v1h-2zM6 4h2v1h-2zM9 4h2v1h-2zM5 5h1v1h-1zM7 5h1v1h-1zM9 5h3v1h-3zM5 6h1v1h-1zM7 6h1v1h-1zM9 6h3v1h-3zM4 7h1v1h-1zM7 7h1v1h-1zM9 7h4v1h-4zM4 8h1v1h-1zM7 8h1v1h-1zM9 8h4v1h-4zM3 9h1v1h-1zM7 9h1v1h-1zM9 9h5v1h-5zM3 10h1v1h-1zM7 10h1v1h-1zM9 10h5v1h-5zM2 11h1v1h-1zM7 11h1v1h-1zM9 11h6v1h-6zM2 12h1v1h-1zM7 12h1v1h-1zM9 12h6v1h-6zM2 13h6v1h-6zM9 13h6v1h-6z"/></svg>
<div class="t" style="left:391px;top:746px;width:50px;justify-content:flex-start;color:#d7ccf7;"><span style="letter-spacing:1.339px;transform:scaleX(0.78);transform-origin:left;margin-left:0.00px">Toggle</span></div>
<div class="r" style="left:466px;top:747px;width:15px;height:15px;border:1px solid #d5c8db;"></div>
<div class="t" style="left:484px;top:746px;width:60px;justify-content:flex-start;color:#d7ccf7;"><span style="letter-spacing:1.004px;transform:scaleX(0.78);transform-origin:left;margin-left:0.00px">NoCheck</span></div>
<div class="r" style="left:574px;top:747px;width:15px;height:15px;border:1px solid #d5c8db;"></div>
<div class="r" style="left:576px;top:749px;width:11px;height:11px;background:#d7ccf7;"></div>
<div class="t" style="left:592px;top:746px;width:60px;justify-content:flex-start;color:#d7ccf7;"><span style="letter-spacing:1.15px;transform:scaleX(0.78);transform-origin:left;margin-left:0.00px">Checked</span></div>
<div class="r" style="left:679px;top:749px;width:100px;height:10px;background:#3e4350;border:1px solid #d5c8db;"></div>
<div class="r" style="left:714px;top:751px;width:10px;height:6px;background:#d7ccf7;"></div>
<div class="r" style="left:794px;top:749px;width:100px;height:10px;background:#3e4350;border:1px solid #d5c8db;"></div>
<div class="r" style="left:795px;top:751px;width:39px;height:6px;background:#d7ccf7;"></div>
<div class="r" style="left:909px;top:749px;width:100px;height:10px;border:1px solid #ab9bd3;"></div>
<div class="r" style="left:910px;top:751px;width:58px;height:6px;background:#966ec0;"></div>
<div class="r" style="left:909px;top:749px;width:59px;height:1px;background:#ee84a0;"></div>
<div class="r" style="left:909px;top:758px;width:59px;height:1px;background:#ee84a0;"></div>
<div class="r" style="left:909px;top:749px;width:1px;height:10px;background:#ee84a0;"></div>
<div class="r" style="left:1024px;top:742px;width:92px;height:24px;background:#3e4350;border:1px solid #d5c8db;"></div>
<div class="r" style="left:1027px;top:745px;width:42px;height:18px;background:#966ec0;"></div>
<svg class="i" style="left:1027px;top:746px" width="16" height="16" viewBox="0 0 16 16"><path fill="#d7ccf7" d="M2 2h12v1h-12zM2 3h1v1h-1zM13 3h1v1h-1zM2 4h1v1h-1zM13 4h1v1h-1zM2 5h1v1h-1zM13 5h1v1h-1zM2 6h5v1h-5zM13 6h1v1h-1zM2 7h5v1h-5zM13 7h1v1h-1zM2 8h5v1h-5zM13 8h1v1h-1zM2 9h5v1h-5zM13 9h1v1h-1zM2 10h1v1h-1zM13 10h1v1h-1zM2 11h1v1h-1zM13 11h1v1h-1zM2 12h1v1h-1zM13 12h1v1h-1zM2 13h12v1h-12z"/></svg>
<div class="t" style="left:1046px;top:746px;width:30px;justify-content:flex-start;color:#d7ccf7;"><span style="letter-spacing:1.49px;transform:scaleX(0.78);transform-origin:left;margin-left:0.00px">OFF</span></div>
<div class="r" style="left:1132px;top:742px;width:92px;height:24px;background:#3e4350;border:1px solid #d5c8db;"></div>
<div class="r" style="left:1179px;top:745px;width:42px;height:18px;background:#966ec0;"></div>
<svg class="i" style="left:1182px;top:746px" width="16" height="16" viewBox="0 0 16 16"><path fill="#d7ccf7" d="M2 2h12v1h-12zM2 3h1v1h-1zM13 3h1v1h-1zM2 4h1v1h-1zM13 4h1v1h-1zM2 5h1v1h-1zM13 5h1v1h-1zM2 6h1v1h-1zM9 6h5v1h-5zM2 7h1v1h-1zM9 7h5v1h-5zM2 8h1v1h-1zM9 8h5v1h-5zM2 9h1v1h-1zM9 9h5v1h-5zM2 10h1v1h-1zM13 10h1v1h-1zM2 11h1v1h-1zM13 11h1v1h-1zM2 12h1v1h-1zM13 12h1v1h-1zM2 13h12v1h-12z"/></svg>
<div class="t" style="left:1201px;top:746px;width:30px;justify-content:flex-start;color:#d7ccf7;"><span style="letter-spacing:1.91px;transform:scaleX(0.78);transform-origin:left;margin-left:0.00px">ON</span></div>
<div class="r" style="left:1239px;top:742px;width:106px;height:24px;background:#966ec0;border:1px solid #d5c8db;"></div>
<svg class="i" style="left:1254px;top:746px" width="16" height="16" viewBox="0 0 16 16"><path fill="#d7ccf7" d="M8 1h1v1h-1zM8 2h1v1h-1zM5 3h2v1h-2zM8 3h1v1h-1zM10 3h1v1h-1zM4 4h1v1h-1zM6 4h1v1h-1zM8 4h1v1h-1zM10 4h2v1h-2zM3 5h1v1h-1zM6 5h1v1h-1zM8 5h1v1h-1zM10 5h3v1h-3zM2 6h1v1h-1zM6 6h1v1h-1zM8 6h1v1h-1zM10 6h4v1h-4zM1 7h1v1h-1zM6 7h1v1h-1zM8 7h1v1h-1zM10 7h5v1h-5zM1 8h1v1h-1zM6 8h1v1h-1zM8 8h1v1h-1zM10 8h5v1h-5zM2 9h1v1h-1zM6 9h1v1h-1zM8 9h1v1h-1zM10 9h4v1h-4zM3 10h1v1h-1zM6 10h1v1h-1zM8 10h1v1h-1zM10 10h3v1h-3zM4 11h1v1h-1zM6 11h1v1h-1zM8 11h1v1h-1zM10 11h2v1h-2zM5 12h2v1h-2zM8 12h1v1h-1zM10 12h1v1h-1zM8 13h1v1h-1zM8 14h1v1h-1z"/></svg>
<div class="t" style="left:1273px;top:746px;width:70px;justify-content:flex-start;color:#d7ccf7;"><span style="letter-spacing:1.125px;transform:scaleX(0.78);transform-origin:left;margin-left:0.00px">ComboBox</span></div>
<div class="r" style="left:1347px;top:742px;width:32px;height:24px;background:#966ec0;border:1px solid #d5c8db;"></div>
<div class="t" style="left:1347px;top:746px;width:32px;justify-content:center;color:#d7ccf7;"><span style="letter-spacing:2.182px;transform:scaleX(0.78);transform-origin:center;margin-left:-0.55px">1/2</span></div>
<div class="r" style="left:1394px;top:742px;width:160px;height:24px;background:#966ec0;border:1px solid #d5c8db;"></div>
<svg class="i" style="left:1424px;top:746px" width="16" height="16" viewBox="0 0 16 16"><path fill="#d7ccf7" d="M7 1h2v1h-2zM6 2h1v1h-1zM9 2h1v1h-1zM5 3h1v1h-1zM10 3h1v1h-1zM4 4h1v1h-1zM11 4h1v1h-1zM3 5h1v1h-1zM12 5h1v1h-1zM3 6h10v1h-10zM1 8h14v1h-14zM3 10h10v1h-10zM4 11h8v1h-8zM5 12h6v1h-6zM6 13h4v1h-4zM7 14h2v1h-2z"/></svg>
<div class="t" style="left:1443px;top:746px;width:90px;justify-content:flex-start;color:#d7ccf7;"><span style="letter-spacing:2.078px;transform:scaleX(0.78);transform-origin:left;margin-left:0.00px">DropdownBox</span></div>
<svg class="i" style="left:1537px;top:751px" width="11" height="6"><path fill="#d7ccf7" d="M0 0h11v1h-11zM1 1h9v1h-9zM2 2h7v1h-7zM3 3h5v1h-5zM4 4h3v1h-3zM5 5h1v1h-1z"/></svg>
<div class="r" style="left:1569px;top:742px;width:100px;height:24px;background:#966ec0;border:1px solid #d5c8db;"></div>
<div class="t" style="left:1573px;top:746px;width:60px;justify-content:flex-start;color:#d7ccf7;"><span style="letter-spacing:2.361px;transform:scaleX(0.78);transform-origin:left;margin-left:0.00px">text box</span></div>
<div class="r" style="left:1684px;top:742px;width:100px;height:24px;background:#966ec0;border:1px solid #d5c8db;"></div>
<div class="t" style="left:1684px;top:746px;width:100px;justify-content:center;color:#d7ccf7;"><span style="letter-spacing:2.977px;transform:scaleX(0.78);transform-origin:center;margin-left:-0.24px">40</span></div>
<div class="r" style="left:1799px;top:742px;width:24px;height:24px;background:#966ec0;border:2px solid #d5c8db;"></div>
<svg class="i" style="left:1807px;top:749px" width="6" height="11"><path fill="#d7ccf7" d="M0 5h1v1h-1zM1 4h1v3h-1zM2 3h1v5h-1zM3 2h1v7h-1zM4 1h1v9h-1zM5 0h1v11h-1z"/></svg>
<div class="t" style="left:40px;top:785px;width:80px;justify-content:flex-start;color:#8292a9;"><span style="letter-spacing:1.437px;transform:scaleX(0.78);transform-origin:left;margin-left:0.00px">DISABLED</span></div>
<svg class="i" style="left:136px;top:785px" width="16" height="16" viewBox="0 0 16 16"><path fill="#8292a9" d="M4 1h10v1h-10zM4 2h1v1h-1zM13 2h1v1h-1zM2 3h3v1h-3zM13 3h1v1h-1zM2 4h1v1h-1zM13 4h1v1h-1zM2 5h1v1h-1zM13 5h1v1h-1zM2 6h1v1h-1zM4 6h8v1h-8zM13 6h1v1h-1zM2 7h1v1h-1zM13 7h1v1h-1zM2 8h1v1h-1zM4 8h8v1h-8zM13 8h1v1h-1zM2 9h1v1h-1zM13 9h1v1h-1zM2 10h1v1h-1zM4 10h8v1h-8zM13 10h1v1h-1zM2 11h1v1h-1zM13 11h1v1h-1zM2 12h1v1h-1zM13 12h1v1h-1zM2 13h1v1h-1zM13 13h1v1h-1zM2 14h12v1h-12z"/></svg>
<div class="t" style="left:155px;top:785px;width:50px;justify-content:flex-start;color:#8292a9;"><span style="letter-spacing:1.856px;transform:scaleX(0.78);transform-origin:left;margin-left:0.00px">Label</span></div>
<div class="r" style="left:234px;top:781px;width:100px;height:24px;background:#6b798d;border:2px solid #8fa2bd;"></div>
<svg class="i" style="left:255px;top:785px" width="16" height="16" viewBox="0 0 16 16"><path fill="#8292a9" d="M1 1h13v1h-13zM1 2h1v1h-1zM5 2h1v1h-1zM10 2h1v1h-1zM14 2h1v1h-1zM1 3h1v1h-1zM5 3h1v1h-1zM10 3h1v1h-1zM14 3h1v1h-1zM1 4h1v1h-1zM5 4h6v1h-6zM14 4h1v1h-1zM1 5h1v1h-1zM14 5h1v1h-1zM1 6h1v1h-1zM14 6h1v1h-1zM1 7h1v1h-1zM3 7h10v1h-10zM14 7h1v1h-1zM1 8h1v1h-1zM3 8h1v1h-1zM12 8h1v1h-1zM14 8h1v1h-1zM1 9h1v1h-1zM3 9h1v1h-1zM5 9h6v1h-6zM12 9h1v1h-1zM14 9h1v1h-1zM1 10h1v1h-1zM3 10h1v1h-1zM12 10h1v1h-1zM14 10h1v1h-1zM1 11h1v1h-1zM3 11h1v1h-1zM12 11h1v1h-1zM14 11h1v1h-1zM1 12h1v1h-1zM3 12h10v1h-10zM14 12h1v1h-1zM1 13h1v1h-1zM14 13h1v1h-1zM1 14h14v1h-14z"/></svg>
<div class="t" style="left:274px;top:785px;width:50px;justify-content:flex-start;color:#8292a9;"><span style="letter-spacing:2.073px;transform:scaleX(0.78);transform-origin:left;margin-left:0.00px">Button</span></div>
<div class="r" style="left:349px;top:781px;width:100px;height:24px;background:#6b798d;border:1px solid #8fa2bd;"></div>
<svg class="i" style="left:371px;top:785px" width="16" height="16" viewBox="0 0 16 16"><path fill="#8292a9" d="M7 2h1v1h-1zM9 2h1v1h-1zM6 3h2v1h-2zM9 3h2v1h-2zM6 4h2v1h-2zM9 4h2v1h-2zM5 5h1v1h-1zM7 5h1v1h-1zM9 5h3v1h-3zM5 6h1v1h-1zM7 6h1v1h-1zM9 6h3v1h-3zM4 7h1v1h-1zM7 7h1v1h-1zM9 7h4v1h-4zM4 8h1v1h-1zM7 8h1v1h-1zM9 8h4v1h-4zM3 9h1v1h-1zM7 9h1v1h-1zM9 9h5v1h-5zM3 10h1v1h-1zM7 10h1v1h-1zM9 10h5v1h-5zM2 11h1v1h-1zM7 11h1v1h-1zM9 11h6v1h-6zM2 12h1v1h-1zM7 12h1v1h-1zM9 12h6v1h-6zM2 13h6v1h-6zM9 13h6v1h-6z"/></svg>
<div class="t" style="left:391px;top:785px;width:50px;justify-content:flex-start;color:#8292a9;"><span style="letter-spacing:1.339px;transform:scaleX(0.78);transform-origin:left;margin-left:0.00px">Toggle</span></div>
<div class="r" style="left:466px;top:786px;width:15px;height:15px;border:1px solid #8fa2bd;"></div>
<div class="t" style="left:484px;top:785px;width:60px;justify-content:flex-start;color:#8292a9;"><span style="letter-spacing:1.004px;transform:scaleX(0.78);transform-origin:left;margin-left:0.00px">NoCheck</span></div>
<div class="r" style="left:574px;top:786px;width:15px;height:15px;border:1px solid #8fa2bd;"></div>
<div class="r" style="left:576px;top:788px;width:11px;height:11px;background:#8292a9;"></div>
<div class="t" style="left:592px;top:785px;width:60px;justify-content:flex-start;color:#8292a9;"><span style="letter-spacing:1.15px;transform:scaleX(0.78);transform-origin:left;margin-left:0.00px">Checked</span></div>
<div class="r" style="left:679px;top:788px;width:100px;height:10px;background:#6b798d;border:1px solid #8fa2bd;"></div>
<div class="r" style="left:714px;top:790px;width:10px;height:6px;background:#8292a9;"></div>
<div class="r" style="left:794px;top:788px;width:100px;height:10px;background:#6b798d;border:1px solid #8fa2bd;"></div>
<div class="r" style="left:795px;top:790px;width:39px;height:6px;background:#8292a9;"></div>
<div class="r" style="left:909px;top:788px;width:100px;height:10px;border:1px solid #8fa2bd;"></div>
<div class="r" style="left:1024px;top:781px;width:92px;height:24px;background:#3e4350;border:1px solid #8fa2bd;"></div>
<svg class="i" style="left:1027px;top:785px" width="16" height="16" viewBox="0 0 16 16"><path fill="#8292a9" d="M2 2h12v1h-12zM2 3h1v1h-1zM13 3h1v1h-1zM2 4h1v1h-1zM13 4h1v1h-1zM2 5h1v1h-1zM13 5h1v1h-1zM2 6h5v1h-5zM13 6h1v1h-1zM2 7h5v1h-5zM13 7h1v1h-1zM2 8h5v1h-5zM13 8h1v1h-1zM2 9h5v1h-5zM13 9h1v1h-1zM2 10h1v1h-1zM13 10h1v1h-1zM2 11h1v1h-1zM13 11h1v1h-1zM2 12h1v1h-1zM13 12h1v1h-1zM2 13h12v1h-12z"/></svg>
<div class="t" style="left:1046px;top:785px;width:30px;justify-content:flex-start;color:#8292a9;"><span style="letter-spacing:1.49px;transform:scaleX(0.78);transform-origin:left;margin-left:0.00px">OFF</span></div>
<div class="r" style="left:1132px;top:781px;width:92px;height:24px;background:#3e4350;border:1px solid #8fa2bd;"></div>
<svg class="i" style="left:1182px;top:785px" width="16" height="16" viewBox="0 0 16 16"><path fill="#8292a9" d="M2 2h12v1h-12zM2 3h1v1h-1zM13 3h1v1h-1zM2 4h1v1h-1zM13 4h1v1h-1zM2 5h1v1h-1zM13 5h1v1h-1zM2 6h1v1h-1zM9 6h5v1h-5zM2 7h1v1h-1zM9 7h5v1h-5zM2 8h1v1h-1zM9 8h5v1h-5zM2 9h1v1h-1zM9 9h5v1h-5zM2 10h1v1h-1zM13 10h1v1h-1zM2 11h1v1h-1zM13 11h1v1h-1zM2 12h1v1h-1zM13 12h1v1h-1zM2 13h12v1h-12z"/></svg>
<div class="t" style="left:1201px;top:785px;width:30px;justify-content:flex-start;color:#8292a9;"><span style="letter-spacing:1.91px;transform:scaleX(0.78);transform-origin:left;margin-left:0.00px">ON</span></div>
<div class="r" style="left:1239px;top:781px;width:106px;height:24px;background:#6b798d;border:1px solid #8fa2bd;"></div>
<svg class="i" style="left:1254px;top:785px" width="16" height="16" viewBox="0 0 16 16"><path fill="#8292a9" d="M8 1h1v1h-1zM8 2h1v1h-1zM5 3h2v1h-2zM8 3h1v1h-1zM10 3h1v1h-1zM4 4h1v1h-1zM6 4h1v1h-1zM8 4h1v1h-1zM10 4h2v1h-2zM3 5h1v1h-1zM6 5h1v1h-1zM8 5h1v1h-1zM10 5h3v1h-3zM2 6h1v1h-1zM6 6h1v1h-1zM8 6h1v1h-1zM10 6h4v1h-4zM1 7h1v1h-1zM6 7h1v1h-1zM8 7h1v1h-1zM10 7h5v1h-5zM1 8h1v1h-1zM6 8h1v1h-1zM8 8h1v1h-1zM10 8h5v1h-5zM2 9h1v1h-1zM6 9h1v1h-1zM8 9h1v1h-1zM10 9h4v1h-4zM3 10h1v1h-1zM6 10h1v1h-1zM8 10h1v1h-1zM10 10h3v1h-3zM4 11h1v1h-1zM6 11h1v1h-1zM8 11h1v1h-1zM10 11h2v1h-2zM5 12h2v1h-2zM8 12h1v1h-1zM10 12h1v1h-1zM8 13h1v1h-1zM8 14h1v1h-1z"/></svg>
<div class="t" style="left:1273px;top:785px;width:70px;justify-content:flex-start;color:#8292a9;"><span style="letter-spacing:1.125px;transform:scaleX(0.78);transform-origin:left;margin-left:0.00px">ComboBox</span></div>
<div class="r" style="left:1347px;top:781px;width:32px;height:24px;background:#6b798d;border:1px solid #8fa2bd;"></div>
<div class="t" style="left:1347px;top:785px;width:32px;justify-content:center;color:#8292a9;"><span style="letter-spacing:2.182px;transform:scaleX(0.78);transform-origin:center;margin-left:-0.55px">1/2</span></div>
<div class="r" style="left:1394px;top:781px;width:160px;height:24px;background:#6b798d;border:1px solid #8fa2bd;"></div>
<svg class="i" style="left:1424px;top:785px" width="16" height="16" viewBox="0 0 16 16"><path fill="#8292a9" d="M7 1h2v1h-2zM6 2h1v1h-1zM9 2h1v1h-1zM5 3h1v1h-1zM10 3h1v1h-1zM4 4h1v1h-1zM11 4h1v1h-1zM3 5h1v1h-1zM12 5h1v1h-1zM3 6h10v1h-10zM1 8h14v1h-14zM3 10h10v1h-10zM4 11h8v1h-8zM5 12h6v1h-6zM6 13h4v1h-4zM7 14h2v1h-2z"/></svg>
<div class="t" style="left:1443px;top:785px;width:90px;justify-content:flex-start;color:#8292a9;"><span style="letter-spacing:2.078px;transform:scaleX(0.78);transform-origin:left;margin-left:0.00px">DropdownBox</span></div>
<svg class="i" style="left:1537px;top:790px" width="11" height="6"><path fill="#8292a9" d="M0 0h11v1h-11zM1 1h9v1h-9zM2 2h7v1h-7zM3 3h5v1h-5zM4 4h3v1h-3zM5 5h1v1h-1z"/></svg>
<div class="r" style="left:1569px;top:781px;width:100px;height:24px;background:#6b798d;border:1px solid #8fa2bd;"></div>
<div class="t" style="left:1573px;top:785px;width:60px;justify-content:flex-start;color:#8292a9;"><span style="letter-spacing:2.361px;transform:scaleX(0.78);transform-origin:left;margin-left:0.00px">text box</span></div>
<div class="r" style="left:1684px;top:781px;width:100px;height:24px;background:#6b798d;border:1px solid #8fa2bd;"></div>
<div class="t" style="left:1684px;top:785px;width:100px;justify-content:center;color:#8292a9;"><span style="letter-spacing:2.977px;transform:scaleX(0.78);transform-origin:center;margin-left:-0.24px">40</span></div>
<div class="r" style="left:1799px;top:781px;width:24px;height:24px;background:#6b798d;border:2px solid #8fa2bd;"></div>
<svg class="i" style="left:1807px;top:788px" width="6" height="11"><path fill="#8292a9" d="M0 5h1v1h-1zM1 4h1v3h-1zM2 3h1v5h-1zM3 2h1v7h-1zM4 1h1v9h-1zM5 0h1v11h-1z"/></svg>
<div class="r" style="left:0px;top:825px;width:1812px;height:12px;background:#3e4350;border:1px solid #ab9bd3;"></div>
<div class="r" style="left:1px;top:827px;width:1710px;height:8px;background:#966ec0;"></div>
<div class="r" style="left:0px;top:836px;width:170px;height:24px;background:#3e4350;border:1px solid #ab9bd3;"></div>
<div class="t" style="left:74px;top:840px;width:90px;justify-content:flex-start;color:#dadaf4;"><span style="letter-spacing:1.894px;transform:scaleX(0.78);transform-origin:left;margin-left:0.00px">Style Name:</span></div>
<div class="r" style="left:318px;top:836px;width:190px;height:24px;background:#3e4350;border:1px solid #ab9bd3;"></div>
<div class="t" style="left:318px;top:840px;width:190px;justify-content:center;color:#dadaf4;"><span style="letter-spacing:1.124px;transform:scaleX(0.78);transform-origin:center;margin-left:-0.96px">CHANGED PROPERTIES: 0</span></div>
<div class="r" style="left:507px;top:836px;width:409px;height:24px;background:#3e4350;border:1px solid #ab9bd3;"></div>
<div class="r" style="left:915px;top:836px;width:320px;height:24px;background:#3e4350;border:1px solid #ab9bd3;"></div>
<div class="t" style="left:915px;top:840px;width:320px;justify-content:center;color:#dadaf4;"><span style="letter-spacing:1.967px;transform:scaleX(0.78);transform-origin:center;margin-left:-0.63px">Font File: Cartridge.ttf [LOADED]</span></div>
<div class="r" style="left:1234px;top:836px;width:160px;height:24px;background:#3e4350;border:1px solid #ab9bd3;"></div>
<div class="t" style="left:1234px;top:840px;width:160px;justify-content:center;color:#dadaf4;"><span style="letter-spacing:1.442px;transform:scaleX(0.78);transform-origin:center;margin-left:-0.84px">Codepoints: 189</span></div>
<div class="r" style="left:1393px;top:836px;width:180px;height:24px;background:#3e4350;border:1px solid #ab9bd3;"></div>
<div class="t" style="left:1393px;top:840px;width:180px;justify-content:center;color:#dadaf4;"><span style="letter-spacing:1.921px;transform:scaleX(0.78);transform-origin:center;margin-left:-0.65px">Atlas Size: 512x256</span></div>
<div class="r" style="left:1572px;top:836px;width:240px;height:24px;background:#3e4350;border:1px solid #ab9bd3;"></div>
<div class="t" style="left:1572px;top:840px;width:240px;justify-content:center;color:#dadaf4;"><span style="letter-spacing:2.069px;transform:scaleX(0.78);transform-origin:center;margin-left:-0.59px">Font white rec: [510, 254, 1, 1]</span></div>
<div class="r" style="left:169px;top:836px;width:150px;height:24px;background:#5b5b81;border:1px solid #ab9bd3;"></div>
<div class="t" style="left:173px;top:840px;width:100px;justify-content:flex-start;color:#dadaf4;"><span style="letter-spacing:2.691px;transform:scaleX(0.78);transform-origin:left;margin-left:0.00px">Lavanda</span></div>
</body></html>
